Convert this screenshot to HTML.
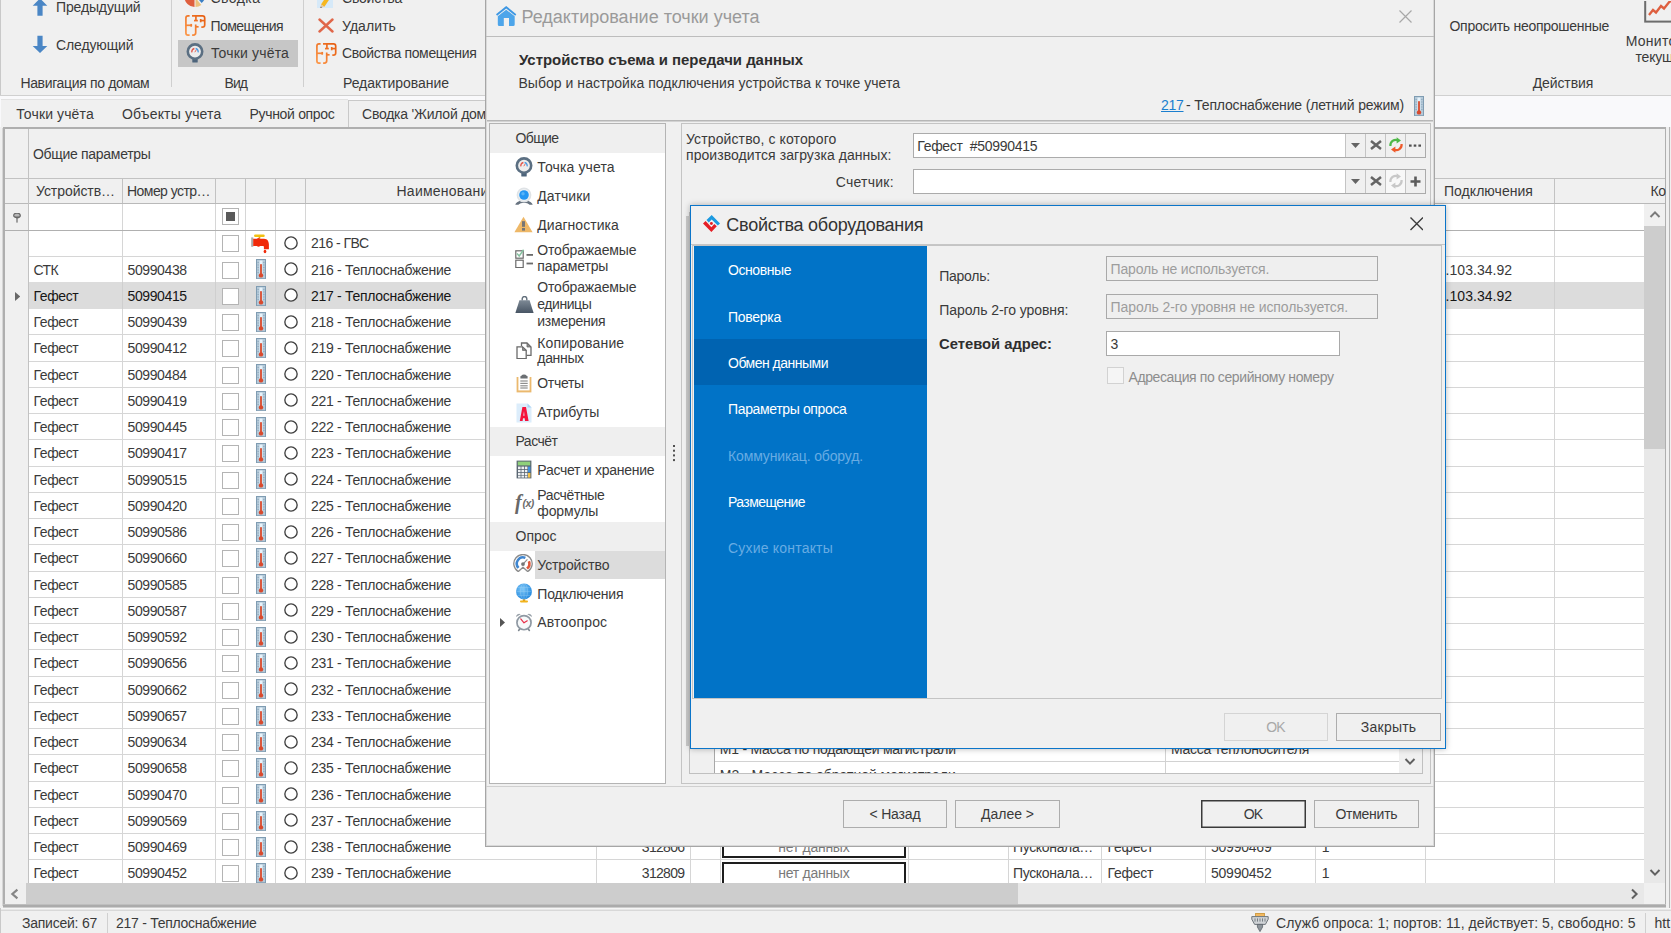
<!DOCTYPE html>
<html><head><meta charset="utf-8"><title>UI</title>
<style>
html,body{margin:0;padding:0;overflow:hidden;width:1671px;height:933px;}
#root{position:absolute;left:0;top:0;width:1671px;height:933px;overflow:hidden;background:#f0f0f0;}
body{width:1671px;height:933px;overflow:hidden;position:relative;background:#f0f0f0;font-family:"Liberation Sans", sans-serif;font-size:14px;color:#333;}
div,span,svg{box-sizing:border-box;}
.clip{position:absolute;overflow:hidden;}
</style></head><body><div id="root">
<div style="position:absolute;left:0px;top:0px;width:1671px;height:95px;background:#f0f0f0"></div>
<div style="position:absolute;left:0px;top:0px;width:1px;height:127px;background:#c9c9c9"></div>
<svg style="position:absolute;left:32px;top:-2px;" width="16" height="18" viewBox="0 0 16 18"><path d="M8 0.4 L15.3 7.8 H10.6 V17.8 H5.4 V7.8 H0.7 Z" fill="#4a86c5"/></svg>
<svg style="position:absolute;left:32px;top:35px;" width="16" height="18.5" viewBox="0 0 16 18.5"><path d="M8 18.1 L15.3 10.9 H10.6 V0.7 H5.4 V10.9 H0.7 Z" fill="#4a86c5"/></svg>
<span style="position:absolute;left:56.00px;top:-1.80px;line-height:18px;white-space:pre;font-size:14px;color:#3a3a3a;letter-spacing:-0.139px;">Предыдущий</span>
<span style="position:absolute;left:56.00px;top:35.50px;line-height:18px;white-space:pre;font-size:14px;color:#3a3a3a;letter-spacing:-0.122px;">Следующий</span>
<span style="position:absolute;left:20.40px;top:74.00px;line-height:18px;white-space:pre;font-size:14px;color:#3a3a3a;letter-spacing:-0.350px;">Навигация по домам</span>
<div style="position:absolute;left:171px;top:0px;width:1px;height:87px;background:#cfcfcf"></div>
<svg style="position:absolute;left:183.5px;top:-14.2px;" width="22" height="22" viewBox="0 0 22 22"><path d="M10.5 11 L10.5 21 A10 10 0 0 1 10.5 1 Z" fill="#df5f3e"/><path d="M11.5 11.8 L11.5 21 A10 10 0 0 0 17.3 18.9 Z" fill="#ecc27c"/><path d="M11.6 9.8 L17.6 17.1 A9.5 9.5 0 0 0 11.6 0.3 Z" fill="#3b7fc4"/></svg>
<span style="position:absolute;left:210.50px;top:-10.90px;line-height:18px;white-space:pre;font-size:14px;color:#3a3a3a;letter-spacing:0.456px;">Сводка</span>
<svg style="position:absolute;left:184.9px;top:15.4px;" width="21" height="21" viewBox="0 0 21 21"><defs><linearGradient id="rg" gradientUnits="userSpaceOnUse" x1="0" y1="21" x2="21" y2="0"><stop offset="0" stop-color="#fd9a4c"/><stop offset="1" stop-color="#e55a0d"/></linearGradient></defs><g fill="none" stroke="url(#rg)" stroke-width="1.7" stroke-linecap="butt" stroke-linejoin="round"><path d="M4.6 0.9 H3 Q0.9 0.9 0.9 3 V18 Q0.9 20.1 3 20.1 H4.6"/><path d="M0.9 10.3 H7.1"/><path d="M6.2 8.9 V11.7"/><path d="M7 0.9 H17.4 Q19.7 0.9 19.7 3.2 V10 Q19.7 12.2 17.4 12.2 H16.3"/><path d="M10.9 0.9 V5.6"/><path d="M9 5.6 H12.8"/><path d="M15.2 5.6 H19.7"/><path d="M15.7 4 V7.3"/><path d="M10.7 9.4 V17.8 Q10.7 20.1 8.4 20.1 H7.1"/><path d="M10.7 11.8 H13.6"/></g></svg>
<span style="position:absolute;left:210.50px;top:16.70px;line-height:18px;white-space:pre;font-size:14px;color:#3a3a3a;letter-spacing:-0.561px;">Помещения</span>
<div style="position:absolute;left:178px;top:40px;width:120px;height:27px;background:#c6c6c6"></div>
<svg style="position:absolute;left:186px;top:43px;" width="18.0" height="20.0" viewBox="0 0 18 20"><rect x="6.3" y="14.6" width="5.4" height="5" rx="0.6" fill="#4d647b"/><circle cx="9" cy="8.6" r="7.2" fill="#ececec" stroke="#5b6f82" stroke-width="2.6"/><path d="M5.9 9.4 A3.2 3.2 0 0 1 8.4 5.5" fill="none" stroke="#e2574b" stroke-width="1.4"/><path d="M9.6 5.5 A3.2 3.2 0 0 1 12.1 9.4" fill="none" stroke="#4d9be0" stroke-width="1.4"/><path d="M8.8 9.2 L10.2 7" stroke="#e2574b" stroke-width="0.9"/></svg>
<span style="position:absolute;left:211.00px;top:44.40px;line-height:18px;white-space:pre;font-size:14px;color:#3a3a3a;letter-spacing:0.165px;">Точки учёта</span>
<span style="position:absolute;left:224.50px;top:74.00px;line-height:18px;white-space:pre;font-size:14px;color:#3a3a3a;letter-spacing:-0.943px;">Вид</span>
<div style="position:absolute;left:303px;top:0px;width:1px;height:87px;background:#cfcfcf"></div>
<svg style="position:absolute;left:316.5px;top:-8.5px;" width="16" height="16" viewBox="0 0 16 16"><rect x="0" y="0" width="16" height="16" fill="#d6e9f8"/><path d="M4 12.6 L11.5 1 L15 3.4 L7.4 14.8 Z" fill="#f6b720"/><path d="M4 12.6 L7.4 14.8 L3.4 16 Z" fill="#e7c9a0"/><path d="M3.8 14.6 L4.9 15.4 L3.4 16 Z" fill="#444"/></svg>
<span style="position:absolute;left:342.00px;top:-10.90px;line-height:18px;white-space:pre;font-size:14px;color:#3a3a3a;letter-spacing:-0.186px;">Свойства</span>
<svg style="position:absolute;left:318px;top:18px;" width="16" height="15" viewBox="0 0 16 15"><path d="M1.5 1.5 L14.5 13.5 M14.5 1.5 L1.5 13.5" stroke="#e0674a" stroke-width="2.4" stroke-linecap="round"/></svg>
<span style="position:absolute;left:342.00px;top:17.10px;line-height:18px;white-space:pre;font-size:14px;color:#3a3a3a;letter-spacing:0.078px;">Удалить</span>
<svg style="position:absolute;left:316px;top:43px;" width="21" height="21" viewBox="0 0 21 21"><defs><linearGradient id="rg" gradientUnits="userSpaceOnUse" x1="0" y1="21" x2="21" y2="0"><stop offset="0" stop-color="#fd9a4c"/><stop offset="1" stop-color="#e55a0d"/></linearGradient></defs><g fill="none" stroke="url(#rg)" stroke-width="1.7" stroke-linecap="butt" stroke-linejoin="round"><path d="M4.6 0.9 H3 Q0.9 0.9 0.9 3 V18 Q0.9 20.1 3 20.1 H4.6"/><path d="M0.9 10.3 H7.1"/><path d="M6.2 8.9 V11.7"/><path d="M7 0.9 H17.4 Q19.7 0.9 19.7 3.2 V10 Q19.7 12.2 17.4 12.2 H16.3"/><path d="M10.9 0.9 V5.6"/><path d="M9 5.6 H12.8"/><path d="M15.2 5.6 H19.7"/><path d="M15.7 4 V7.3"/><path d="M10.7 9.4 V17.8 Q10.7 20.1 8.4 20.1 H7.1"/><path d="M10.7 11.8 H13.6"/></g></svg>
<span style="position:absolute;left:342.00px;top:44.40px;line-height:18px;white-space:pre;font-size:14px;color:#3a3a3a;letter-spacing:-0.330px;">Свойства помещения</span>
<span style="position:absolute;left:343.00px;top:74.00px;line-height:18px;white-space:pre;font-size:14px;color:#3a3a3a;letter-spacing:-0.047px;">Редактирование</span>
<span style="position:absolute;left:1449.50px;top:17.40px;line-height:18px;white-space:pre;font-size:14px;color:#3a3a3a;letter-spacing:-0.274px;">Опросить неопрошенные</span>
<svg style="position:absolute;left:1644px;top:0.6px;" width="40" height="24" viewBox="0 0 40 24"><rect x="1.2" y="-6" width="44" height="26.6" fill="#f0f0f0" stroke="#6c6c6c" stroke-width="2"/><path d="M5 14 L9 9 L12 11.5 L17 5 L20 7.5 L26 0 L30 2" fill="none" stroke="#de5f3f" stroke-width="2.3"/></svg>
<span style="position:absolute;left:1625.80px;top:32.40px;line-height:18px;white-space:pre;font-size:14px;color:#3a3a3a;letter-spacing:0.234px;">Мониторинг</span>
<span style="position:absolute;left:1635.60px;top:48.30px;line-height:18px;white-space:pre;font-size:14px;color:#3a3a3a;letter-spacing:-0.239px;">текущих</span>
<span style="position:absolute;left:1532.70px;top:74.40px;line-height:18px;white-space:pre;font-size:14px;color:#3a3a3a;letter-spacing:-0.105px;">Действия</span>
<div style="position:absolute;left:0px;top:95px;width:1671px;height:1px;background:#d0d0d0"></div>
<div style="position:absolute;left:0px;top:96px;width:1671px;height:31px;background:#f9f9fb"></div>
<div style="position:absolute;left:1px;top:99px;width:347px;height:28px;background:#f0f0f0;border-top:1px solid #e2e2e2"></div>
<div style="position:absolute;left:348px;top:100px;width:200px;height:27px;background:#f0f0f0;border:1px solid #c9c9c9;border-bottom:none"></div>
<span style="position:absolute;left:16.30px;top:104.50px;line-height:18px;white-space:pre;font-size:14px;color:#3a3a3a;letter-spacing:0.119px;">Точки учёта</span>
<span style="position:absolute;left:122.00px;top:104.50px;line-height:18px;white-space:pre;font-size:14px;color:#3a3a3a;letter-spacing:0.169px;">Объекты учета</span>
<span style="position:absolute;left:249.50px;top:104.50px;line-height:18px;white-space:pre;font-size:14px;color:#3a3a3a;letter-spacing:-0.318px;">Ручной опрос</span>
<span style="position:absolute;left:362.00px;top:104.50px;line-height:18px;white-space:pre;font-size:14px;color:#3a3a3a;letter-spacing:-0.233px;">Сводка &#x27;Жилой дом</span>
<div style="position:absolute;left:3px;top:127px;width:1663px;height:783px;background:#fff;border:2px solid #afafaf;border-right-width:1px"></div>
<div style="position:absolute;left:1666px;top:127px;width:5px;height:781px;background:#f0f0f0"></div>
<div style="position:absolute;left:2px;top:128px;width:1px;height:778px;background:#d6d6d6"></div>
<div style="position:absolute;left:1669px;top:127px;width:1px;height:781px;background:#b4b4b4"></div>
<div style="position:absolute;left:5px;top:129px;width:1660px;height:75px;background:#f0f0f0"></div>
<div style="position:absolute;left:5px;top:178px;width:1660px;height:1px;background:#c2c2c2"></div>
<div style="position:absolute;left:5px;top:203px;width:1660px;height:1px;background:#b9b9b9"></div>
<span style="position:absolute;left:33.00px;top:145.00px;line-height:18px;white-space:pre;font-size:14px;color:#3a3a3a;letter-spacing:-0.305px;">Общие параметры</span>
<div style="position:absolute;left:5px;top:204px;width:23px;height:680px;background:#f0f0f0"></div>
<div style="position:absolute;left:28px;top:129px;width:1px;height:755px;background:#c2c2c2"></div>
<div style="position:absolute;left:122px;top:179px;width:1px;height:24px;background:#c2c2c2"></div>
<div style="position:absolute;left:122px;top:204px;width:1px;height:680px;background:#d6d6d6"></div>
<div style="position:absolute;left:215px;top:179px;width:1px;height:24px;background:#c2c2c2"></div>
<div style="position:absolute;left:215px;top:204px;width:1px;height:680px;background:#d6d6d6"></div>
<div style="position:absolute;left:245px;top:179px;width:1px;height:24px;background:#c2c2c2"></div>
<div style="position:absolute;left:245px;top:204px;width:1px;height:680px;background:#d6d6d6"></div>
<div style="position:absolute;left:275px;top:179px;width:1px;height:24px;background:#c2c2c2"></div>
<div style="position:absolute;left:275px;top:204px;width:1px;height:680px;background:#d6d6d6"></div>
<div style="position:absolute;left:305px;top:179px;width:1px;height:24px;background:#c2c2c2"></div>
<div style="position:absolute;left:305px;top:204px;width:1px;height:680px;background:#d6d6d6"></div>
<div style="position:absolute;left:596px;top:179px;width:1px;height:24px;background:#c2c2c2"></div>
<div style="position:absolute;left:596px;top:204px;width:1px;height:680px;background:#d6d6d6"></div>
<div style="position:absolute;left:690px;top:179px;width:1px;height:24px;background:#c2c2c2"></div>
<div style="position:absolute;left:690px;top:204px;width:1px;height:680px;background:#d6d6d6"></div>
<div style="position:absolute;left:720px;top:179px;width:1px;height:24px;background:#c2c2c2"></div>
<div style="position:absolute;left:720px;top:204px;width:1px;height:680px;background:#d6d6d6"></div>
<div style="position:absolute;left:908px;top:179px;width:1px;height:24px;background:#c2c2c2"></div>
<div style="position:absolute;left:908px;top:204px;width:1px;height:680px;background:#d6d6d6"></div>
<div style="position:absolute;left:1008px;top:179px;width:1px;height:24px;background:#c2c2c2"></div>
<div style="position:absolute;left:1008px;top:204px;width:1px;height:680px;background:#d6d6d6"></div>
<div style="position:absolute;left:1101px;top:179px;width:1px;height:24px;background:#c2c2c2"></div>
<div style="position:absolute;left:1101px;top:204px;width:1px;height:680px;background:#d6d6d6"></div>
<div style="position:absolute;left:1205px;top:179px;width:1px;height:24px;background:#c2c2c2"></div>
<div style="position:absolute;left:1205px;top:204px;width:1px;height:680px;background:#d6d6d6"></div>
<div style="position:absolute;left:1315px;top:179px;width:1px;height:24px;background:#c2c2c2"></div>
<div style="position:absolute;left:1315px;top:204px;width:1px;height:680px;background:#d6d6d6"></div>
<div style="position:absolute;left:1425px;top:179px;width:1px;height:24px;background:#c2c2c2"></div>
<div style="position:absolute;left:1425px;top:204px;width:1px;height:680px;background:#d6d6d6"></div>
<div style="position:absolute;left:1554px;top:179px;width:1px;height:24px;background:#c2c2c2"></div>
<div style="position:absolute;left:1554px;top:204px;width:1px;height:680px;background:#d6d6d6"></div>
<span style="position:absolute;left:36.00px;top:182.00px;line-height:18px;white-space:pre;font-size:14px;color:#3a3a3a;letter-spacing:-0.062px;">Устройств…</span>
<span style="position:absolute;left:127.00px;top:182.00px;line-height:18px;white-space:pre;font-size:14px;color:#3a3a3a;letter-spacing:-0.548px;">Номер устр…</span>
<span style="position:absolute;left:396.50px;top:182.00px;line-height:18px;white-space:pre;font-size:14px;color:#3a3a3a;letter-spacing:0.245px;">Наименование</span>
<span style="position:absolute;left:1444.00px;top:182.00px;line-height:18px;white-space:pre;font-size:14px;color:#3a3a3a;letter-spacing:0.038px;">Подключения</span>
<span style="position:absolute;left:1650.40px;top:182.00px;line-height:18px;white-space:pre;font-size:14px;color:#3a3a3a;letter-spacing:-0.227px;">Ко</span>
<div style="position:absolute;left:5px;top:230px;width:1639px;height:1px;background:#b0b0b0"></div>
<svg style="position:absolute;left:13px;top:212.8px;" width="8" height="11" viewBox="0 0 8 11"><ellipse cx="4" cy="2.4" rx="3.3" ry="2.2" fill="#b8b8b8" stroke="#6a6a6a" stroke-width="1.2"/><path d="M1.2 3.4 L4 5.6 L6.8 3.4 Z" fill="#6a6a6a"/><rect x="3.4" y="4.6" width="1.2" height="5" fill="#6a6a6a"/></svg>
<svg style="position:absolute;left:222.0px;top:208.0px;" width="17" height="17" viewBox="0 0 17 17"><rect x="0.5" y="0.5" width="16" height="16" fill="#fff" stroke="#b4b4b4"/><rect x="4" y="4" width="9" height="9" fill="#5a5a5a"/></svg>
<div class="clip" style="left:5px;top:231px;width:1639px;height:652px">
<svg style="position:absolute;left:217.0px;top:3.5px;" width="17" height="17" viewBox="0 0 17 17"><rect x="0.5" y="0.5" width="16" height="16" fill="#fff" stroke="#b4b4b4"/></svg>
<svg style="position:absolute;left:246px;top:3px;" width="19" height="20" viewBox="0 0 19 20"><rect x="3.1" y="0.4" width="10.6" height="2.7" rx="1.1" fill="#f2c010"/><rect x="7.6" y="2.8" width="1.7" height="1.8" fill="#e0a010"/><rect x="0.2" y="3.4" width="2.1" height="9.4" fill="#a9a9a9"/><path d="M2.2 4.8 H5.8 Q7.5 3.4 9.2 4.8 H13 C16.6 4.8 17.9 7.6 17.9 10.6 V15.2 H12.9 V12.7 C12.9 12.1 12.6 11.9 12 11.9 H9.2 Q7.5 13.4 5.8 11.9 H2.2 Z" fill="#f02a0a"/><ellipse cx="14" cy="17.5" rx="1.35" ry="1.8" fill="#f02a0a"/></svg>
<svg style="position:absolute;left:277.8px;top:4.199999999999999px;" width="16" height="16" viewBox="0 0 16 16"><circle cx="8" cy="8" r="6.15" fill="#fff" stroke="#404040" stroke-width="1.35"/></svg>
<span style="position:absolute;left:306.00px;top:3.40px;line-height:18px;white-space:pre;font-size:14px;color:#3a3a3a;letter-spacing:-0.542px;">216 - ГВС</span>
<div style="position:absolute;left:24px;top:25px;width:1615px;height:1px;background:#d6d6d6"></div>
<span style="position:absolute;left:28.60px;top:29.65px;line-height:18px;white-space:pre;font-size:14px;color:#3a3a3a;letter-spacing:-0.620px;">СТК</span>
<span style="position:absolute;left:122.50px;top:29.65px;line-height:18px;white-space:pre;font-size:14px;color:#3a3a3a;letter-spacing:-0.387px;">50990438</span>
<svg style="position:absolute;left:217.0px;top:30.5px;" width="17" height="17" viewBox="0 0 17 17"><rect x="0.5" y="0.5" width="16" height="16" fill="#fff" stroke="#b4b4b4"/></svg>
<svg style="position:absolute;left:251.2px;top:28px;" width="10" height="20.2" viewBox="0 0 10 20.2"><rect x="0.5" y="0.5" width="9" height="19.2" fill="#b4c9d8" stroke="#7f9cb2"/><rect x="3.5" y="1.6" width="3" height="15" fill="#e6f3fb"/><rect x="4" y="5.2" width="2" height="11" fill="#d9593f"/><circle cx="5" cy="16.4" r="2.2" fill="#d84a2e"/><g stroke="#8aa5b9" stroke-width="0.7"><line x1="1.4" y1="3.5" x2="3" y2="3.5"/><line x1="1.4" y1="6" x2="3" y2="6"/><line x1="1.4" y1="8.5" x2="3" y2="8.5"/><line x1="1.4" y1="11" x2="3" y2="11"/><line x1="1.4" y1="13.5" x2="3" y2="13.5"/><line x1="7" y1="3.5" x2="8.6" y2="3.5"/><line x1="7" y1="6" x2="8.6" y2="6"/><line x1="7" y1="8.5" x2="8.6" y2="8.5"/><line x1="7" y1="11" x2="8.6" y2="11"/><line x1="7" y1="13.5" x2="8.6" y2="13.5"/></g></svg>
<svg style="position:absolute;left:277.8px;top:30.200000000000003px;" width="16" height="16" viewBox="0 0 16 16"><circle cx="8" cy="8" r="6.15" fill="#fff" stroke="#404040" stroke-width="1.35"/></svg>
<span style="position:absolute;left:306.00px;top:29.65px;line-height:18px;white-space:pre;font-size:14px;color:#3a3a3a;letter-spacing:-0.296px;">216 - Теплоснабжение</span>
<span style="position:absolute;left:1440.60px;top:29.65px;line-height:18px;white-space:pre;font-size:14px;color:#3a3a3a;letter-spacing:0.033px;">.103.34.92</span>
<div style="position:absolute;left:24px;top:51px;width:1615px;height:27px;background:#dcdcdc"></div>
<div style="position:absolute;left:117px;top:51px;width:1px;height:27px;background:#cfcfcf"></div>
<div style="position:absolute;left:210px;top:51px;width:1px;height:27px;background:#cfcfcf"></div>
<div style="position:absolute;left:240px;top:51px;width:1px;height:27px;background:#cfcfcf"></div>
<div style="position:absolute;left:270px;top:51px;width:1px;height:27px;background:#cfcfcf"></div>
<div style="position:absolute;left:300px;top:51px;width:1px;height:27px;background:#cfcfcf"></div>
<div style="position:absolute;left:591px;top:51px;width:1px;height:27px;background:#cfcfcf"></div>
<div style="position:absolute;left:685px;top:51px;width:1px;height:27px;background:#cfcfcf"></div>
<div style="position:absolute;left:715px;top:51px;width:1px;height:27px;background:#cfcfcf"></div>
<div style="position:absolute;left:903px;top:51px;width:1px;height:27px;background:#cfcfcf"></div>
<div style="position:absolute;left:1003px;top:51px;width:1px;height:27px;background:#cfcfcf"></div>
<div style="position:absolute;left:1096px;top:51px;width:1px;height:27px;background:#cfcfcf"></div>
<div style="position:absolute;left:1200px;top:51px;width:1px;height:27px;background:#cfcfcf"></div>
<div style="position:absolute;left:1310px;top:51px;width:1px;height:27px;background:#cfcfcf"></div>
<div style="position:absolute;left:1420px;top:51px;width:1px;height:27px;background:#cfcfcf"></div>
<div style="position:absolute;left:1549px;top:51px;width:1px;height:27px;background:#cfcfcf"></div>
<svg style="position:absolute;left:9.8px;top:61px;" width="5.2" height="9" viewBox="0 0 5.2 9"><path d="M0 0 L5.2 4.5 L0 9 Z" fill="#686868"/></svg>
<span style="position:absolute;left:28.60px;top:55.90px;line-height:18px;white-space:pre;font-size:14px;color:#161616;letter-spacing:-0.393px;">Гефест</span>
<span style="position:absolute;left:122.50px;top:55.90px;line-height:18px;white-space:pre;font-size:14px;color:#161616;letter-spacing:-0.387px;">50990415</span>
<svg style="position:absolute;left:217.0px;top:56.5px;" width="17" height="17" viewBox="0 0 17 17"><rect x="0.5" y="0.5" width="16" height="16" fill="#fff" stroke="#b4b4b4"/></svg>
<svg style="position:absolute;left:251.2px;top:55px;" width="10" height="20.2" viewBox="0 0 10 20.2"><rect x="0.5" y="0.5" width="9" height="19.2" fill="#b4c9d8" stroke="#7f9cb2"/><rect x="3.5" y="1.6" width="3" height="15" fill="#e6f3fb"/><rect x="4" y="5.2" width="2" height="11" fill="#d9593f"/><circle cx="5" cy="16.4" r="2.2" fill="#d84a2e"/><g stroke="#8aa5b9" stroke-width="0.7"><line x1="1.4" y1="3.5" x2="3" y2="3.5"/><line x1="1.4" y1="6" x2="3" y2="6"/><line x1="1.4" y1="8.5" x2="3" y2="8.5"/><line x1="1.4" y1="11" x2="3" y2="11"/><line x1="1.4" y1="13.5" x2="3" y2="13.5"/><line x1="7" y1="3.5" x2="8.6" y2="3.5"/><line x1="7" y1="6" x2="8.6" y2="6"/><line x1="7" y1="8.5" x2="8.6" y2="8.5"/><line x1="7" y1="11" x2="8.6" y2="11"/><line x1="7" y1="13.5" x2="8.6" y2="13.5"/></g></svg>
<svg style="position:absolute;left:277.8px;top:56.2px;" width="16" height="16" viewBox="0 0 16 16"><circle cx="8" cy="8" r="6.15" fill="#fff" stroke="#404040" stroke-width="1.35"/></svg>
<span style="position:absolute;left:306.00px;top:55.90px;line-height:18px;white-space:pre;font-size:14px;color:#161616;letter-spacing:-0.296px;">217 - Теплоснабжение</span>
<span style="position:absolute;left:1440.60px;top:55.90px;line-height:18px;white-space:pre;font-size:14px;color:#161616;letter-spacing:0.033px;">.103.34.92</span>
<span style="position:absolute;left:28.60px;top:82.15px;line-height:18px;white-space:pre;font-size:14px;color:#3a3a3a;letter-spacing:-0.393px;">Гефест</span>
<span style="position:absolute;left:122.50px;top:82.15px;line-height:18px;white-space:pre;font-size:14px;color:#3a3a3a;letter-spacing:-0.387px;">50990439</span>
<svg style="position:absolute;left:217.0px;top:82.5px;" width="17" height="17" viewBox="0 0 17 17"><rect x="0.5" y="0.5" width="16" height="16" fill="#fff" stroke="#b4b4b4"/></svg>
<svg style="position:absolute;left:251.2px;top:81px;" width="10" height="20.2" viewBox="0 0 10 20.2"><rect x="0.5" y="0.5" width="9" height="19.2" fill="#b4c9d8" stroke="#7f9cb2"/><rect x="3.5" y="1.6" width="3" height="15" fill="#e6f3fb"/><rect x="4" y="5.2" width="2" height="11" fill="#d9593f"/><circle cx="5" cy="16.4" r="2.2" fill="#d84a2e"/><g stroke="#8aa5b9" stroke-width="0.7"><line x1="1.4" y1="3.5" x2="3" y2="3.5"/><line x1="1.4" y1="6" x2="3" y2="6"/><line x1="1.4" y1="8.5" x2="3" y2="8.5"/><line x1="1.4" y1="11" x2="3" y2="11"/><line x1="1.4" y1="13.5" x2="3" y2="13.5"/><line x1="7" y1="3.5" x2="8.6" y2="3.5"/><line x1="7" y1="6" x2="8.6" y2="6"/><line x1="7" y1="8.5" x2="8.6" y2="8.5"/><line x1="7" y1="11" x2="8.6" y2="11"/><line x1="7" y1="13.5" x2="8.6" y2="13.5"/></g></svg>
<svg style="position:absolute;left:277.8px;top:83.2px;" width="16" height="16" viewBox="0 0 16 16"><circle cx="8" cy="8" r="6.15" fill="#fff" stroke="#404040" stroke-width="1.35"/></svg>
<span style="position:absolute;left:306.00px;top:82.15px;line-height:18px;white-space:pre;font-size:14px;color:#3a3a3a;letter-spacing:-0.296px;">218 - Теплоснабжение</span>
<div style="position:absolute;left:24px;top:103px;width:1615px;height:1px;background:#d6d6d6"></div>
<span style="position:absolute;left:28.60px;top:108.40px;line-height:18px;white-space:pre;font-size:14px;color:#3a3a3a;letter-spacing:-0.393px;">Гефест</span>
<span style="position:absolute;left:122.50px;top:108.40px;line-height:18px;white-space:pre;font-size:14px;color:#3a3a3a;letter-spacing:-0.387px;">50990412</span>
<svg style="position:absolute;left:217.0px;top:108.5px;" width="17" height="17" viewBox="0 0 17 17"><rect x="0.5" y="0.5" width="16" height="16" fill="#fff" stroke="#b4b4b4"/></svg>
<svg style="position:absolute;left:251.2px;top:107px;" width="10" height="20.2" viewBox="0 0 10 20.2"><rect x="0.5" y="0.5" width="9" height="19.2" fill="#b4c9d8" stroke="#7f9cb2"/><rect x="3.5" y="1.6" width="3" height="15" fill="#e6f3fb"/><rect x="4" y="5.2" width="2" height="11" fill="#d9593f"/><circle cx="5" cy="16.4" r="2.2" fill="#d84a2e"/><g stroke="#8aa5b9" stroke-width="0.7"><line x1="1.4" y1="3.5" x2="3" y2="3.5"/><line x1="1.4" y1="6" x2="3" y2="6"/><line x1="1.4" y1="8.5" x2="3" y2="8.5"/><line x1="1.4" y1="11" x2="3" y2="11"/><line x1="1.4" y1="13.5" x2="3" y2="13.5"/><line x1="7" y1="3.5" x2="8.6" y2="3.5"/><line x1="7" y1="6" x2="8.6" y2="6"/><line x1="7" y1="8.5" x2="8.6" y2="8.5"/><line x1="7" y1="11" x2="8.6" y2="11"/><line x1="7" y1="13.5" x2="8.6" y2="13.5"/></g></svg>
<svg style="position:absolute;left:277.8px;top:109.2px;" width="16" height="16" viewBox="0 0 16 16"><circle cx="8" cy="8" r="6.15" fill="#fff" stroke="#404040" stroke-width="1.35"/></svg>
<span style="position:absolute;left:306.00px;top:108.40px;line-height:18px;white-space:pre;font-size:14px;color:#3a3a3a;letter-spacing:-0.296px;">219 - Теплоснабжение</span>
<div style="position:absolute;left:24px;top:130px;width:1615px;height:1px;background:#d6d6d6"></div>
<span style="position:absolute;left:28.60px;top:134.65px;line-height:18px;white-space:pre;font-size:14px;color:#3a3a3a;letter-spacing:-0.393px;">Гефест</span>
<span style="position:absolute;left:122.50px;top:134.65px;line-height:18px;white-space:pre;font-size:14px;color:#3a3a3a;letter-spacing:-0.387px;">50990484</span>
<svg style="position:absolute;left:217.0px;top:135.5px;" width="17" height="17" viewBox="0 0 17 17"><rect x="0.5" y="0.5" width="16" height="16" fill="#fff" stroke="#b4b4b4"/></svg>
<svg style="position:absolute;left:251.2px;top:133px;" width="10" height="20.2" viewBox="0 0 10 20.2"><rect x="0.5" y="0.5" width="9" height="19.2" fill="#b4c9d8" stroke="#7f9cb2"/><rect x="3.5" y="1.6" width="3" height="15" fill="#e6f3fb"/><rect x="4" y="5.2" width="2" height="11" fill="#d9593f"/><circle cx="5" cy="16.4" r="2.2" fill="#d84a2e"/><g stroke="#8aa5b9" stroke-width="0.7"><line x1="1.4" y1="3.5" x2="3" y2="3.5"/><line x1="1.4" y1="6" x2="3" y2="6"/><line x1="1.4" y1="8.5" x2="3" y2="8.5"/><line x1="1.4" y1="11" x2="3" y2="11"/><line x1="1.4" y1="13.5" x2="3" y2="13.5"/><line x1="7" y1="3.5" x2="8.6" y2="3.5"/><line x1="7" y1="6" x2="8.6" y2="6"/><line x1="7" y1="8.5" x2="8.6" y2="8.5"/><line x1="7" y1="11" x2="8.6" y2="11"/><line x1="7" y1="13.5" x2="8.6" y2="13.5"/></g></svg>
<svg style="position:absolute;left:277.8px;top:135.2px;" width="16" height="16" viewBox="0 0 16 16"><circle cx="8" cy="8" r="6.15" fill="#fff" stroke="#404040" stroke-width="1.35"/></svg>
<span style="position:absolute;left:306.00px;top:134.65px;line-height:18px;white-space:pre;font-size:14px;color:#3a3a3a;letter-spacing:-0.296px;">220 - Теплоснабжение</span>
<div style="position:absolute;left:24px;top:156px;width:1615px;height:1px;background:#d6d6d6"></div>
<span style="position:absolute;left:28.60px;top:160.90px;line-height:18px;white-space:pre;font-size:14px;color:#3a3a3a;letter-spacing:-0.393px;">Гефест</span>
<span style="position:absolute;left:122.50px;top:160.90px;line-height:18px;white-space:pre;font-size:14px;color:#3a3a3a;letter-spacing:-0.387px;">50990419</span>
<svg style="position:absolute;left:217.0px;top:161.5px;" width="17" height="17" viewBox="0 0 17 17"><rect x="0.5" y="0.5" width="16" height="16" fill="#fff" stroke="#b4b4b4"/></svg>
<svg style="position:absolute;left:251.2px;top:160px;" width="10" height="20.2" viewBox="0 0 10 20.2"><rect x="0.5" y="0.5" width="9" height="19.2" fill="#b4c9d8" stroke="#7f9cb2"/><rect x="3.5" y="1.6" width="3" height="15" fill="#e6f3fb"/><rect x="4" y="5.2" width="2" height="11" fill="#d9593f"/><circle cx="5" cy="16.4" r="2.2" fill="#d84a2e"/><g stroke="#8aa5b9" stroke-width="0.7"><line x1="1.4" y1="3.5" x2="3" y2="3.5"/><line x1="1.4" y1="6" x2="3" y2="6"/><line x1="1.4" y1="8.5" x2="3" y2="8.5"/><line x1="1.4" y1="11" x2="3" y2="11"/><line x1="1.4" y1="13.5" x2="3" y2="13.5"/><line x1="7" y1="3.5" x2="8.6" y2="3.5"/><line x1="7" y1="6" x2="8.6" y2="6"/><line x1="7" y1="8.5" x2="8.6" y2="8.5"/><line x1="7" y1="11" x2="8.6" y2="11"/><line x1="7" y1="13.5" x2="8.6" y2="13.5"/></g></svg>
<svg style="position:absolute;left:277.8px;top:161.2px;" width="16" height="16" viewBox="0 0 16 16"><circle cx="8" cy="8" r="6.15" fill="#fff" stroke="#404040" stroke-width="1.35"/></svg>
<span style="position:absolute;left:306.00px;top:160.90px;line-height:18px;white-space:pre;font-size:14px;color:#3a3a3a;letter-spacing:-0.296px;">221 - Теплоснабжение</span>
<div style="position:absolute;left:24px;top:182px;width:1615px;height:1px;background:#d6d6d6"></div>
<span style="position:absolute;left:28.60px;top:187.15px;line-height:18px;white-space:pre;font-size:14px;color:#3a3a3a;letter-spacing:-0.393px;">Гефест</span>
<span style="position:absolute;left:122.50px;top:187.15px;line-height:18px;white-space:pre;font-size:14px;color:#3a3a3a;letter-spacing:-0.387px;">50990445</span>
<svg style="position:absolute;left:217.0px;top:187.5px;" width="17" height="17" viewBox="0 0 17 17"><rect x="0.5" y="0.5" width="16" height="16" fill="#fff" stroke="#b4b4b4"/></svg>
<svg style="position:absolute;left:251.2px;top:186px;" width="10" height="20.2" viewBox="0 0 10 20.2"><rect x="0.5" y="0.5" width="9" height="19.2" fill="#b4c9d8" stroke="#7f9cb2"/><rect x="3.5" y="1.6" width="3" height="15" fill="#e6f3fb"/><rect x="4" y="5.2" width="2" height="11" fill="#d9593f"/><circle cx="5" cy="16.4" r="2.2" fill="#d84a2e"/><g stroke="#8aa5b9" stroke-width="0.7"><line x1="1.4" y1="3.5" x2="3" y2="3.5"/><line x1="1.4" y1="6" x2="3" y2="6"/><line x1="1.4" y1="8.5" x2="3" y2="8.5"/><line x1="1.4" y1="11" x2="3" y2="11"/><line x1="1.4" y1="13.5" x2="3" y2="13.5"/><line x1="7" y1="3.5" x2="8.6" y2="3.5"/><line x1="7" y1="6" x2="8.6" y2="6"/><line x1="7" y1="8.5" x2="8.6" y2="8.5"/><line x1="7" y1="11" x2="8.6" y2="11"/><line x1="7" y1="13.5" x2="8.6" y2="13.5"/></g></svg>
<svg style="position:absolute;left:277.8px;top:188.2px;" width="16" height="16" viewBox="0 0 16 16"><circle cx="8" cy="8" r="6.15" fill="#fff" stroke="#404040" stroke-width="1.35"/></svg>
<span style="position:absolute;left:306.00px;top:187.15px;line-height:18px;white-space:pre;font-size:14px;color:#3a3a3a;letter-spacing:-0.296px;">222 - Теплоснабжение</span>
<div style="position:absolute;left:24px;top:208px;width:1615px;height:1px;background:#d6d6d6"></div>
<span style="position:absolute;left:28.60px;top:213.40px;line-height:18px;white-space:pre;font-size:14px;color:#3a3a3a;letter-spacing:-0.393px;">Гефест</span>
<span style="position:absolute;left:122.50px;top:213.40px;line-height:18px;white-space:pre;font-size:14px;color:#3a3a3a;letter-spacing:-0.387px;">50990417</span>
<svg style="position:absolute;left:217.0px;top:213.5px;" width="17" height="17" viewBox="0 0 17 17"><rect x="0.5" y="0.5" width="16" height="16" fill="#fff" stroke="#b4b4b4"/></svg>
<svg style="position:absolute;left:251.2px;top:212px;" width="10" height="20.2" viewBox="0 0 10 20.2"><rect x="0.5" y="0.5" width="9" height="19.2" fill="#b4c9d8" stroke="#7f9cb2"/><rect x="3.5" y="1.6" width="3" height="15" fill="#e6f3fb"/><rect x="4" y="5.2" width="2" height="11" fill="#d9593f"/><circle cx="5" cy="16.4" r="2.2" fill="#d84a2e"/><g stroke="#8aa5b9" stroke-width="0.7"><line x1="1.4" y1="3.5" x2="3" y2="3.5"/><line x1="1.4" y1="6" x2="3" y2="6"/><line x1="1.4" y1="8.5" x2="3" y2="8.5"/><line x1="1.4" y1="11" x2="3" y2="11"/><line x1="1.4" y1="13.5" x2="3" y2="13.5"/><line x1="7" y1="3.5" x2="8.6" y2="3.5"/><line x1="7" y1="6" x2="8.6" y2="6"/><line x1="7" y1="8.5" x2="8.6" y2="8.5"/><line x1="7" y1="11" x2="8.6" y2="11"/><line x1="7" y1="13.5" x2="8.6" y2="13.5"/></g></svg>
<svg style="position:absolute;left:277.8px;top:214.2px;" width="16" height="16" viewBox="0 0 16 16"><circle cx="8" cy="8" r="6.15" fill="#fff" stroke="#404040" stroke-width="1.35"/></svg>
<span style="position:absolute;left:306.00px;top:213.40px;line-height:18px;white-space:pre;font-size:14px;color:#3a3a3a;letter-spacing:-0.296px;">223 - Теплоснабжение</span>
<div style="position:absolute;left:24px;top:235px;width:1615px;height:1px;background:#d6d6d6"></div>
<span style="position:absolute;left:28.60px;top:239.65px;line-height:18px;white-space:pre;font-size:14px;color:#3a3a3a;letter-spacing:-0.393px;">Гефест</span>
<span style="position:absolute;left:122.50px;top:239.65px;line-height:18px;white-space:pre;font-size:14px;color:#3a3a3a;letter-spacing:-0.387px;">50990515</span>
<svg style="position:absolute;left:217.0px;top:240.5px;" width="17" height="17" viewBox="0 0 17 17"><rect x="0.5" y="0.5" width="16" height="16" fill="#fff" stroke="#b4b4b4"/></svg>
<svg style="position:absolute;left:251.2px;top:238px;" width="10" height="20.2" viewBox="0 0 10 20.2"><rect x="0.5" y="0.5" width="9" height="19.2" fill="#b4c9d8" stroke="#7f9cb2"/><rect x="3.5" y="1.6" width="3" height="15" fill="#e6f3fb"/><rect x="4" y="5.2" width="2" height="11" fill="#d9593f"/><circle cx="5" cy="16.4" r="2.2" fill="#d84a2e"/><g stroke="#8aa5b9" stroke-width="0.7"><line x1="1.4" y1="3.5" x2="3" y2="3.5"/><line x1="1.4" y1="6" x2="3" y2="6"/><line x1="1.4" y1="8.5" x2="3" y2="8.5"/><line x1="1.4" y1="11" x2="3" y2="11"/><line x1="1.4" y1="13.5" x2="3" y2="13.5"/><line x1="7" y1="3.5" x2="8.6" y2="3.5"/><line x1="7" y1="6" x2="8.6" y2="6"/><line x1="7" y1="8.5" x2="8.6" y2="8.5"/><line x1="7" y1="11" x2="8.6" y2="11"/><line x1="7" y1="13.5" x2="8.6" y2="13.5"/></g></svg>
<svg style="position:absolute;left:277.8px;top:240.2px;" width="16" height="16" viewBox="0 0 16 16"><circle cx="8" cy="8" r="6.15" fill="#fff" stroke="#404040" stroke-width="1.35"/></svg>
<span style="position:absolute;left:306.00px;top:239.65px;line-height:18px;white-space:pre;font-size:14px;color:#3a3a3a;letter-spacing:-0.296px;">224 - Теплоснабжение</span>
<div style="position:absolute;left:24px;top:261px;width:1615px;height:1px;background:#d6d6d6"></div>
<span style="position:absolute;left:28.60px;top:265.90px;line-height:18px;white-space:pre;font-size:14px;color:#3a3a3a;letter-spacing:-0.393px;">Гефест</span>
<span style="position:absolute;left:122.50px;top:265.90px;line-height:18px;white-space:pre;font-size:14px;color:#3a3a3a;letter-spacing:-0.387px;">50990420</span>
<svg style="position:absolute;left:217.0px;top:266.5px;" width="17" height="17" viewBox="0 0 17 17"><rect x="0.5" y="0.5" width="16" height="16" fill="#fff" stroke="#b4b4b4"/></svg>
<svg style="position:absolute;left:251.2px;top:265px;" width="10" height="20.2" viewBox="0 0 10 20.2"><rect x="0.5" y="0.5" width="9" height="19.2" fill="#b4c9d8" stroke="#7f9cb2"/><rect x="3.5" y="1.6" width="3" height="15" fill="#e6f3fb"/><rect x="4" y="5.2" width="2" height="11" fill="#d9593f"/><circle cx="5" cy="16.4" r="2.2" fill="#d84a2e"/><g stroke="#8aa5b9" stroke-width="0.7"><line x1="1.4" y1="3.5" x2="3" y2="3.5"/><line x1="1.4" y1="6" x2="3" y2="6"/><line x1="1.4" y1="8.5" x2="3" y2="8.5"/><line x1="1.4" y1="11" x2="3" y2="11"/><line x1="1.4" y1="13.5" x2="3" y2="13.5"/><line x1="7" y1="3.5" x2="8.6" y2="3.5"/><line x1="7" y1="6" x2="8.6" y2="6"/><line x1="7" y1="8.5" x2="8.6" y2="8.5"/><line x1="7" y1="11" x2="8.6" y2="11"/><line x1="7" y1="13.5" x2="8.6" y2="13.5"/></g></svg>
<svg style="position:absolute;left:277.8px;top:266.2px;" width="16" height="16" viewBox="0 0 16 16"><circle cx="8" cy="8" r="6.15" fill="#fff" stroke="#404040" stroke-width="1.35"/></svg>
<span style="position:absolute;left:306.00px;top:265.90px;line-height:18px;white-space:pre;font-size:14px;color:#3a3a3a;letter-spacing:-0.296px;">225 - Теплоснабжение</span>
<div style="position:absolute;left:24px;top:287px;width:1615px;height:1px;background:#d6d6d6"></div>
<span style="position:absolute;left:28.60px;top:292.15px;line-height:18px;white-space:pre;font-size:14px;color:#3a3a3a;letter-spacing:-0.393px;">Гефест</span>
<span style="position:absolute;left:122.50px;top:292.15px;line-height:18px;white-space:pre;font-size:14px;color:#3a3a3a;letter-spacing:-0.387px;">50990586</span>
<svg style="position:absolute;left:217.0px;top:292.5px;" width="17" height="17" viewBox="0 0 17 17"><rect x="0.5" y="0.5" width="16" height="16" fill="#fff" stroke="#b4b4b4"/></svg>
<svg style="position:absolute;left:251.2px;top:291px;" width="10" height="20.2" viewBox="0 0 10 20.2"><rect x="0.5" y="0.5" width="9" height="19.2" fill="#b4c9d8" stroke="#7f9cb2"/><rect x="3.5" y="1.6" width="3" height="15" fill="#e6f3fb"/><rect x="4" y="5.2" width="2" height="11" fill="#d9593f"/><circle cx="5" cy="16.4" r="2.2" fill="#d84a2e"/><g stroke="#8aa5b9" stroke-width="0.7"><line x1="1.4" y1="3.5" x2="3" y2="3.5"/><line x1="1.4" y1="6" x2="3" y2="6"/><line x1="1.4" y1="8.5" x2="3" y2="8.5"/><line x1="1.4" y1="11" x2="3" y2="11"/><line x1="1.4" y1="13.5" x2="3" y2="13.5"/><line x1="7" y1="3.5" x2="8.6" y2="3.5"/><line x1="7" y1="6" x2="8.6" y2="6"/><line x1="7" y1="8.5" x2="8.6" y2="8.5"/><line x1="7" y1="11" x2="8.6" y2="11"/><line x1="7" y1="13.5" x2="8.6" y2="13.5"/></g></svg>
<svg style="position:absolute;left:277.8px;top:293.2px;" width="16" height="16" viewBox="0 0 16 16"><circle cx="8" cy="8" r="6.15" fill="#fff" stroke="#404040" stroke-width="1.35"/></svg>
<span style="position:absolute;left:306.00px;top:292.15px;line-height:18px;white-space:pre;font-size:14px;color:#3a3a3a;letter-spacing:-0.296px;">226 - Теплоснабжение</span>
<div style="position:absolute;left:24px;top:313px;width:1615px;height:1px;background:#d6d6d6"></div>
<span style="position:absolute;left:28.60px;top:318.40px;line-height:18px;white-space:pre;font-size:14px;color:#3a3a3a;letter-spacing:-0.393px;">Гефест</span>
<span style="position:absolute;left:122.50px;top:318.40px;line-height:18px;white-space:pre;font-size:14px;color:#3a3a3a;letter-spacing:-0.387px;">50990660</span>
<svg style="position:absolute;left:217.0px;top:318.5px;" width="17" height="17" viewBox="0 0 17 17"><rect x="0.5" y="0.5" width="16" height="16" fill="#fff" stroke="#b4b4b4"/></svg>
<svg style="position:absolute;left:251.2px;top:317px;" width="10" height="20.2" viewBox="0 0 10 20.2"><rect x="0.5" y="0.5" width="9" height="19.2" fill="#b4c9d8" stroke="#7f9cb2"/><rect x="3.5" y="1.6" width="3" height="15" fill="#e6f3fb"/><rect x="4" y="5.2" width="2" height="11" fill="#d9593f"/><circle cx="5" cy="16.4" r="2.2" fill="#d84a2e"/><g stroke="#8aa5b9" stroke-width="0.7"><line x1="1.4" y1="3.5" x2="3" y2="3.5"/><line x1="1.4" y1="6" x2="3" y2="6"/><line x1="1.4" y1="8.5" x2="3" y2="8.5"/><line x1="1.4" y1="11" x2="3" y2="11"/><line x1="1.4" y1="13.5" x2="3" y2="13.5"/><line x1="7" y1="3.5" x2="8.6" y2="3.5"/><line x1="7" y1="6" x2="8.6" y2="6"/><line x1="7" y1="8.5" x2="8.6" y2="8.5"/><line x1="7" y1="11" x2="8.6" y2="11"/><line x1="7" y1="13.5" x2="8.6" y2="13.5"/></g></svg>
<svg style="position:absolute;left:277.8px;top:319.2px;" width="16" height="16" viewBox="0 0 16 16"><circle cx="8" cy="8" r="6.15" fill="#fff" stroke="#404040" stroke-width="1.35"/></svg>
<span style="position:absolute;left:306.00px;top:318.40px;line-height:18px;white-space:pre;font-size:14px;color:#3a3a3a;letter-spacing:-0.296px;">227 - Теплоснабжение</span>
<div style="position:absolute;left:24px;top:340px;width:1615px;height:1px;background:#d6d6d6"></div>
<span style="position:absolute;left:28.60px;top:344.65px;line-height:18px;white-space:pre;font-size:14px;color:#3a3a3a;letter-spacing:-0.393px;">Гефест</span>
<span style="position:absolute;left:122.50px;top:344.65px;line-height:18px;white-space:pre;font-size:14px;color:#3a3a3a;letter-spacing:-0.387px;">50990585</span>
<svg style="position:absolute;left:217.0px;top:345.5px;" width="17" height="17" viewBox="0 0 17 17"><rect x="0.5" y="0.5" width="16" height="16" fill="#fff" stroke="#b4b4b4"/></svg>
<svg style="position:absolute;left:251.2px;top:343px;" width="10" height="20.2" viewBox="0 0 10 20.2"><rect x="0.5" y="0.5" width="9" height="19.2" fill="#b4c9d8" stroke="#7f9cb2"/><rect x="3.5" y="1.6" width="3" height="15" fill="#e6f3fb"/><rect x="4" y="5.2" width="2" height="11" fill="#d9593f"/><circle cx="5" cy="16.4" r="2.2" fill="#d84a2e"/><g stroke="#8aa5b9" stroke-width="0.7"><line x1="1.4" y1="3.5" x2="3" y2="3.5"/><line x1="1.4" y1="6" x2="3" y2="6"/><line x1="1.4" y1="8.5" x2="3" y2="8.5"/><line x1="1.4" y1="11" x2="3" y2="11"/><line x1="1.4" y1="13.5" x2="3" y2="13.5"/><line x1="7" y1="3.5" x2="8.6" y2="3.5"/><line x1="7" y1="6" x2="8.6" y2="6"/><line x1="7" y1="8.5" x2="8.6" y2="8.5"/><line x1="7" y1="11" x2="8.6" y2="11"/><line x1="7" y1="13.5" x2="8.6" y2="13.5"/></g></svg>
<svg style="position:absolute;left:277.8px;top:345.2px;" width="16" height="16" viewBox="0 0 16 16"><circle cx="8" cy="8" r="6.15" fill="#fff" stroke="#404040" stroke-width="1.35"/></svg>
<span style="position:absolute;left:306.00px;top:344.65px;line-height:18px;white-space:pre;font-size:14px;color:#3a3a3a;letter-spacing:-0.296px;">228 - Теплоснабжение</span>
<div style="position:absolute;left:24px;top:366px;width:1615px;height:1px;background:#d6d6d6"></div>
<span style="position:absolute;left:28.60px;top:370.90px;line-height:18px;white-space:pre;font-size:14px;color:#3a3a3a;letter-spacing:-0.393px;">Гефест</span>
<span style="position:absolute;left:122.50px;top:370.90px;line-height:18px;white-space:pre;font-size:14px;color:#3a3a3a;letter-spacing:-0.387px;">50990587</span>
<svg style="position:absolute;left:217.0px;top:371.5px;" width="17" height="17" viewBox="0 0 17 17"><rect x="0.5" y="0.5" width="16" height="16" fill="#fff" stroke="#b4b4b4"/></svg>
<svg style="position:absolute;left:251.2px;top:370px;" width="10" height="20.2" viewBox="0 0 10 20.2"><rect x="0.5" y="0.5" width="9" height="19.2" fill="#b4c9d8" stroke="#7f9cb2"/><rect x="3.5" y="1.6" width="3" height="15" fill="#e6f3fb"/><rect x="4" y="5.2" width="2" height="11" fill="#d9593f"/><circle cx="5" cy="16.4" r="2.2" fill="#d84a2e"/><g stroke="#8aa5b9" stroke-width="0.7"><line x1="1.4" y1="3.5" x2="3" y2="3.5"/><line x1="1.4" y1="6" x2="3" y2="6"/><line x1="1.4" y1="8.5" x2="3" y2="8.5"/><line x1="1.4" y1="11" x2="3" y2="11"/><line x1="1.4" y1="13.5" x2="3" y2="13.5"/><line x1="7" y1="3.5" x2="8.6" y2="3.5"/><line x1="7" y1="6" x2="8.6" y2="6"/><line x1="7" y1="8.5" x2="8.6" y2="8.5"/><line x1="7" y1="11" x2="8.6" y2="11"/><line x1="7" y1="13.5" x2="8.6" y2="13.5"/></g></svg>
<svg style="position:absolute;left:277.8px;top:371.2px;" width="16" height="16" viewBox="0 0 16 16"><circle cx="8" cy="8" r="6.15" fill="#fff" stroke="#404040" stroke-width="1.35"/></svg>
<span style="position:absolute;left:306.00px;top:370.90px;line-height:18px;white-space:pre;font-size:14px;color:#3a3a3a;letter-spacing:-0.296px;">229 - Теплоснабжение</span>
<div style="position:absolute;left:24px;top:392px;width:1615px;height:1px;background:#d6d6d6"></div>
<span style="position:absolute;left:28.60px;top:397.15px;line-height:18px;white-space:pre;font-size:14px;color:#3a3a3a;letter-spacing:-0.393px;">Гефест</span>
<span style="position:absolute;left:122.50px;top:397.15px;line-height:18px;white-space:pre;font-size:14px;color:#3a3a3a;letter-spacing:-0.387px;">50990592</span>
<svg style="position:absolute;left:217.0px;top:397.5px;" width="17" height="17" viewBox="0 0 17 17"><rect x="0.5" y="0.5" width="16" height="16" fill="#fff" stroke="#b4b4b4"/></svg>
<svg style="position:absolute;left:251.2px;top:396px;" width="10" height="20.2" viewBox="0 0 10 20.2"><rect x="0.5" y="0.5" width="9" height="19.2" fill="#b4c9d8" stroke="#7f9cb2"/><rect x="3.5" y="1.6" width="3" height="15" fill="#e6f3fb"/><rect x="4" y="5.2" width="2" height="11" fill="#d9593f"/><circle cx="5" cy="16.4" r="2.2" fill="#d84a2e"/><g stroke="#8aa5b9" stroke-width="0.7"><line x1="1.4" y1="3.5" x2="3" y2="3.5"/><line x1="1.4" y1="6" x2="3" y2="6"/><line x1="1.4" y1="8.5" x2="3" y2="8.5"/><line x1="1.4" y1="11" x2="3" y2="11"/><line x1="1.4" y1="13.5" x2="3" y2="13.5"/><line x1="7" y1="3.5" x2="8.6" y2="3.5"/><line x1="7" y1="6" x2="8.6" y2="6"/><line x1="7" y1="8.5" x2="8.6" y2="8.5"/><line x1="7" y1="11" x2="8.6" y2="11"/><line x1="7" y1="13.5" x2="8.6" y2="13.5"/></g></svg>
<svg style="position:absolute;left:277.8px;top:398.2px;" width="16" height="16" viewBox="0 0 16 16"><circle cx="8" cy="8" r="6.15" fill="#fff" stroke="#404040" stroke-width="1.35"/></svg>
<span style="position:absolute;left:306.00px;top:397.15px;line-height:18px;white-space:pre;font-size:14px;color:#3a3a3a;letter-spacing:-0.296px;">230 - Теплоснабжение</span>
<div style="position:absolute;left:24px;top:418px;width:1615px;height:1px;background:#d6d6d6"></div>
<span style="position:absolute;left:28.60px;top:423.40px;line-height:18px;white-space:pre;font-size:14px;color:#3a3a3a;letter-spacing:-0.393px;">Гефест</span>
<span style="position:absolute;left:122.50px;top:423.40px;line-height:18px;white-space:pre;font-size:14px;color:#3a3a3a;letter-spacing:-0.387px;">50990656</span>
<svg style="position:absolute;left:217.0px;top:423.5px;" width="17" height="17" viewBox="0 0 17 17"><rect x="0.5" y="0.5" width="16" height="16" fill="#fff" stroke="#b4b4b4"/></svg>
<svg style="position:absolute;left:251.2px;top:422px;" width="10" height="20.2" viewBox="0 0 10 20.2"><rect x="0.5" y="0.5" width="9" height="19.2" fill="#b4c9d8" stroke="#7f9cb2"/><rect x="3.5" y="1.6" width="3" height="15" fill="#e6f3fb"/><rect x="4" y="5.2" width="2" height="11" fill="#d9593f"/><circle cx="5" cy="16.4" r="2.2" fill="#d84a2e"/><g stroke="#8aa5b9" stroke-width="0.7"><line x1="1.4" y1="3.5" x2="3" y2="3.5"/><line x1="1.4" y1="6" x2="3" y2="6"/><line x1="1.4" y1="8.5" x2="3" y2="8.5"/><line x1="1.4" y1="11" x2="3" y2="11"/><line x1="1.4" y1="13.5" x2="3" y2="13.5"/><line x1="7" y1="3.5" x2="8.6" y2="3.5"/><line x1="7" y1="6" x2="8.6" y2="6"/><line x1="7" y1="8.5" x2="8.6" y2="8.5"/><line x1="7" y1="11" x2="8.6" y2="11"/><line x1="7" y1="13.5" x2="8.6" y2="13.5"/></g></svg>
<svg style="position:absolute;left:277.8px;top:424.2px;" width="16" height="16" viewBox="0 0 16 16"><circle cx="8" cy="8" r="6.15" fill="#fff" stroke="#404040" stroke-width="1.35"/></svg>
<span style="position:absolute;left:306.00px;top:423.40px;line-height:18px;white-space:pre;font-size:14px;color:#3a3a3a;letter-spacing:-0.296px;">231 - Теплоснабжение</span>
<div style="position:absolute;left:24px;top:445px;width:1615px;height:1px;background:#d6d6d6"></div>
<span style="position:absolute;left:28.60px;top:449.65px;line-height:18px;white-space:pre;font-size:14px;color:#3a3a3a;letter-spacing:-0.393px;">Гефест</span>
<span style="position:absolute;left:122.50px;top:449.65px;line-height:18px;white-space:pre;font-size:14px;color:#3a3a3a;letter-spacing:-0.387px;">50990662</span>
<svg style="position:absolute;left:217.0px;top:450.5px;" width="17" height="17" viewBox="0 0 17 17"><rect x="0.5" y="0.5" width="16" height="16" fill="#fff" stroke="#b4b4b4"/></svg>
<svg style="position:absolute;left:251.2px;top:448px;" width="10" height="20.2" viewBox="0 0 10 20.2"><rect x="0.5" y="0.5" width="9" height="19.2" fill="#b4c9d8" stroke="#7f9cb2"/><rect x="3.5" y="1.6" width="3" height="15" fill="#e6f3fb"/><rect x="4" y="5.2" width="2" height="11" fill="#d9593f"/><circle cx="5" cy="16.4" r="2.2" fill="#d84a2e"/><g stroke="#8aa5b9" stroke-width="0.7"><line x1="1.4" y1="3.5" x2="3" y2="3.5"/><line x1="1.4" y1="6" x2="3" y2="6"/><line x1="1.4" y1="8.5" x2="3" y2="8.5"/><line x1="1.4" y1="11" x2="3" y2="11"/><line x1="1.4" y1="13.5" x2="3" y2="13.5"/><line x1="7" y1="3.5" x2="8.6" y2="3.5"/><line x1="7" y1="6" x2="8.6" y2="6"/><line x1="7" y1="8.5" x2="8.6" y2="8.5"/><line x1="7" y1="11" x2="8.6" y2="11"/><line x1="7" y1="13.5" x2="8.6" y2="13.5"/></g></svg>
<svg style="position:absolute;left:277.8px;top:450.2px;" width="16" height="16" viewBox="0 0 16 16"><circle cx="8" cy="8" r="6.15" fill="#fff" stroke="#404040" stroke-width="1.35"/></svg>
<span style="position:absolute;left:306.00px;top:449.65px;line-height:18px;white-space:pre;font-size:14px;color:#3a3a3a;letter-spacing:-0.296px;">232 - Теплоснабжение</span>
<div style="position:absolute;left:24px;top:471px;width:1615px;height:1px;background:#d6d6d6"></div>
<span style="position:absolute;left:28.60px;top:475.90px;line-height:18px;white-space:pre;font-size:14px;color:#3a3a3a;letter-spacing:-0.393px;">Гефест</span>
<span style="position:absolute;left:122.50px;top:475.90px;line-height:18px;white-space:pre;font-size:14px;color:#3a3a3a;letter-spacing:-0.387px;">50990657</span>
<svg style="position:absolute;left:217.0px;top:476.5px;" width="17" height="17" viewBox="0 0 17 17"><rect x="0.5" y="0.5" width="16" height="16" fill="#fff" stroke="#b4b4b4"/></svg>
<svg style="position:absolute;left:251.2px;top:475px;" width="10" height="20.2" viewBox="0 0 10 20.2"><rect x="0.5" y="0.5" width="9" height="19.2" fill="#b4c9d8" stroke="#7f9cb2"/><rect x="3.5" y="1.6" width="3" height="15" fill="#e6f3fb"/><rect x="4" y="5.2" width="2" height="11" fill="#d9593f"/><circle cx="5" cy="16.4" r="2.2" fill="#d84a2e"/><g stroke="#8aa5b9" stroke-width="0.7"><line x1="1.4" y1="3.5" x2="3" y2="3.5"/><line x1="1.4" y1="6" x2="3" y2="6"/><line x1="1.4" y1="8.5" x2="3" y2="8.5"/><line x1="1.4" y1="11" x2="3" y2="11"/><line x1="1.4" y1="13.5" x2="3" y2="13.5"/><line x1="7" y1="3.5" x2="8.6" y2="3.5"/><line x1="7" y1="6" x2="8.6" y2="6"/><line x1="7" y1="8.5" x2="8.6" y2="8.5"/><line x1="7" y1="11" x2="8.6" y2="11"/><line x1="7" y1="13.5" x2="8.6" y2="13.5"/></g></svg>
<svg style="position:absolute;left:277.8px;top:476.2px;" width="16" height="16" viewBox="0 0 16 16"><circle cx="8" cy="8" r="6.15" fill="#fff" stroke="#404040" stroke-width="1.35"/></svg>
<span style="position:absolute;left:306.00px;top:475.90px;line-height:18px;white-space:pre;font-size:14px;color:#3a3a3a;letter-spacing:-0.296px;">233 - Теплоснабжение</span>
<div style="position:absolute;left:24px;top:497px;width:1615px;height:1px;background:#d6d6d6"></div>
<span style="position:absolute;left:28.60px;top:502.15px;line-height:18px;white-space:pre;font-size:14px;color:#3a3a3a;letter-spacing:-0.393px;">Гефест</span>
<span style="position:absolute;left:122.50px;top:502.15px;line-height:18px;white-space:pre;font-size:14px;color:#3a3a3a;letter-spacing:-0.387px;">50990634</span>
<svg style="position:absolute;left:217.0px;top:502.5px;" width="17" height="17" viewBox="0 0 17 17"><rect x="0.5" y="0.5" width="16" height="16" fill="#fff" stroke="#b4b4b4"/></svg>
<svg style="position:absolute;left:251.2px;top:501px;" width="10" height="20.2" viewBox="0 0 10 20.2"><rect x="0.5" y="0.5" width="9" height="19.2" fill="#b4c9d8" stroke="#7f9cb2"/><rect x="3.5" y="1.6" width="3" height="15" fill="#e6f3fb"/><rect x="4" y="5.2" width="2" height="11" fill="#d9593f"/><circle cx="5" cy="16.4" r="2.2" fill="#d84a2e"/><g stroke="#8aa5b9" stroke-width="0.7"><line x1="1.4" y1="3.5" x2="3" y2="3.5"/><line x1="1.4" y1="6" x2="3" y2="6"/><line x1="1.4" y1="8.5" x2="3" y2="8.5"/><line x1="1.4" y1="11" x2="3" y2="11"/><line x1="1.4" y1="13.5" x2="3" y2="13.5"/><line x1="7" y1="3.5" x2="8.6" y2="3.5"/><line x1="7" y1="6" x2="8.6" y2="6"/><line x1="7" y1="8.5" x2="8.6" y2="8.5"/><line x1="7" y1="11" x2="8.6" y2="11"/><line x1="7" y1="13.5" x2="8.6" y2="13.5"/></g></svg>
<svg style="position:absolute;left:277.8px;top:503.2px;" width="16" height="16" viewBox="0 0 16 16"><circle cx="8" cy="8" r="6.15" fill="#fff" stroke="#404040" stroke-width="1.35"/></svg>
<span style="position:absolute;left:306.00px;top:502.15px;line-height:18px;white-space:pre;font-size:14px;color:#3a3a3a;letter-spacing:-0.296px;">234 - Теплоснабжение</span>
<div style="position:absolute;left:24px;top:523px;width:1615px;height:1px;background:#d6d6d6"></div>
<span style="position:absolute;left:28.60px;top:528.40px;line-height:18px;white-space:pre;font-size:14px;color:#3a3a3a;letter-spacing:-0.393px;">Гефест</span>
<span style="position:absolute;left:122.50px;top:528.40px;line-height:18px;white-space:pre;font-size:14px;color:#3a3a3a;letter-spacing:-0.387px;">50990658</span>
<svg style="position:absolute;left:217.0px;top:528.5px;" width="17" height="17" viewBox="0 0 17 17"><rect x="0.5" y="0.5" width="16" height="16" fill="#fff" stroke="#b4b4b4"/></svg>
<svg style="position:absolute;left:251.2px;top:527px;" width="10" height="20.2" viewBox="0 0 10 20.2"><rect x="0.5" y="0.5" width="9" height="19.2" fill="#b4c9d8" stroke="#7f9cb2"/><rect x="3.5" y="1.6" width="3" height="15" fill="#e6f3fb"/><rect x="4" y="5.2" width="2" height="11" fill="#d9593f"/><circle cx="5" cy="16.4" r="2.2" fill="#d84a2e"/><g stroke="#8aa5b9" stroke-width="0.7"><line x1="1.4" y1="3.5" x2="3" y2="3.5"/><line x1="1.4" y1="6" x2="3" y2="6"/><line x1="1.4" y1="8.5" x2="3" y2="8.5"/><line x1="1.4" y1="11" x2="3" y2="11"/><line x1="1.4" y1="13.5" x2="3" y2="13.5"/><line x1="7" y1="3.5" x2="8.6" y2="3.5"/><line x1="7" y1="6" x2="8.6" y2="6"/><line x1="7" y1="8.5" x2="8.6" y2="8.5"/><line x1="7" y1="11" x2="8.6" y2="11"/><line x1="7" y1="13.5" x2="8.6" y2="13.5"/></g></svg>
<svg style="position:absolute;left:277.8px;top:529.2px;" width="16" height="16" viewBox="0 0 16 16"><circle cx="8" cy="8" r="6.15" fill="#fff" stroke="#404040" stroke-width="1.35"/></svg>
<span style="position:absolute;left:306.00px;top:528.40px;line-height:18px;white-space:pre;font-size:14px;color:#3a3a3a;letter-spacing:-0.296px;">235 - Теплоснабжение</span>
<div style="position:absolute;left:24px;top:550px;width:1615px;height:1px;background:#d6d6d6"></div>
<span style="position:absolute;left:28.60px;top:554.65px;line-height:18px;white-space:pre;font-size:14px;color:#3a3a3a;letter-spacing:-0.393px;">Гефест</span>
<span style="position:absolute;left:122.50px;top:554.65px;line-height:18px;white-space:pre;font-size:14px;color:#3a3a3a;letter-spacing:-0.387px;">50990470</span>
<svg style="position:absolute;left:217.0px;top:555.5px;" width="17" height="17" viewBox="0 0 17 17"><rect x="0.5" y="0.5" width="16" height="16" fill="#fff" stroke="#b4b4b4"/></svg>
<svg style="position:absolute;left:251.2px;top:553px;" width="10" height="20.2" viewBox="0 0 10 20.2"><rect x="0.5" y="0.5" width="9" height="19.2" fill="#b4c9d8" stroke="#7f9cb2"/><rect x="3.5" y="1.6" width="3" height="15" fill="#e6f3fb"/><rect x="4" y="5.2" width="2" height="11" fill="#d9593f"/><circle cx="5" cy="16.4" r="2.2" fill="#d84a2e"/><g stroke="#8aa5b9" stroke-width="0.7"><line x1="1.4" y1="3.5" x2="3" y2="3.5"/><line x1="1.4" y1="6" x2="3" y2="6"/><line x1="1.4" y1="8.5" x2="3" y2="8.5"/><line x1="1.4" y1="11" x2="3" y2="11"/><line x1="1.4" y1="13.5" x2="3" y2="13.5"/><line x1="7" y1="3.5" x2="8.6" y2="3.5"/><line x1="7" y1="6" x2="8.6" y2="6"/><line x1="7" y1="8.5" x2="8.6" y2="8.5"/><line x1="7" y1="11" x2="8.6" y2="11"/><line x1="7" y1="13.5" x2="8.6" y2="13.5"/></g></svg>
<svg style="position:absolute;left:277.8px;top:555.2px;" width="16" height="16" viewBox="0 0 16 16"><circle cx="8" cy="8" r="6.15" fill="#fff" stroke="#404040" stroke-width="1.35"/></svg>
<span style="position:absolute;left:306.00px;top:554.65px;line-height:18px;white-space:pre;font-size:14px;color:#3a3a3a;letter-spacing:-0.296px;">236 - Теплоснабжение</span>
<div style="position:absolute;left:24px;top:576px;width:1615px;height:1px;background:#d6d6d6"></div>
<span style="position:absolute;left:28.60px;top:580.90px;line-height:18px;white-space:pre;font-size:14px;color:#3a3a3a;letter-spacing:-0.393px;">Гефест</span>
<span style="position:absolute;left:122.50px;top:580.90px;line-height:18px;white-space:pre;font-size:14px;color:#3a3a3a;letter-spacing:-0.387px;">50990569</span>
<svg style="position:absolute;left:217.0px;top:581.5px;" width="17" height="17" viewBox="0 0 17 17"><rect x="0.5" y="0.5" width="16" height="16" fill="#fff" stroke="#b4b4b4"/></svg>
<svg style="position:absolute;left:251.2px;top:580px;" width="10" height="20.2" viewBox="0 0 10 20.2"><rect x="0.5" y="0.5" width="9" height="19.2" fill="#b4c9d8" stroke="#7f9cb2"/><rect x="3.5" y="1.6" width="3" height="15" fill="#e6f3fb"/><rect x="4" y="5.2" width="2" height="11" fill="#d9593f"/><circle cx="5" cy="16.4" r="2.2" fill="#d84a2e"/><g stroke="#8aa5b9" stroke-width="0.7"><line x1="1.4" y1="3.5" x2="3" y2="3.5"/><line x1="1.4" y1="6" x2="3" y2="6"/><line x1="1.4" y1="8.5" x2="3" y2="8.5"/><line x1="1.4" y1="11" x2="3" y2="11"/><line x1="1.4" y1="13.5" x2="3" y2="13.5"/><line x1="7" y1="3.5" x2="8.6" y2="3.5"/><line x1="7" y1="6" x2="8.6" y2="6"/><line x1="7" y1="8.5" x2="8.6" y2="8.5"/><line x1="7" y1="11" x2="8.6" y2="11"/><line x1="7" y1="13.5" x2="8.6" y2="13.5"/></g></svg>
<svg style="position:absolute;left:277.8px;top:581.2px;" width="16" height="16" viewBox="0 0 16 16"><circle cx="8" cy="8" r="6.15" fill="#fff" stroke="#404040" stroke-width="1.35"/></svg>
<span style="position:absolute;left:306.00px;top:580.90px;line-height:18px;white-space:pre;font-size:14px;color:#3a3a3a;letter-spacing:-0.296px;">237 - Теплоснабжение</span>
<div style="position:absolute;left:24px;top:602px;width:1615px;height:1px;background:#d6d6d6"></div>
<span style="position:absolute;left:28.60px;top:607.15px;line-height:18px;white-space:pre;font-size:14px;color:#3a3a3a;letter-spacing:-0.393px;">Гефест</span>
<span style="position:absolute;left:122.50px;top:607.15px;line-height:18px;white-space:pre;font-size:14px;color:#3a3a3a;letter-spacing:-0.387px;">50990469</span>
<svg style="position:absolute;left:217.0px;top:607.5px;" width="17" height="17" viewBox="0 0 17 17"><rect x="0.5" y="0.5" width="16" height="16" fill="#fff" stroke="#b4b4b4"/></svg>
<svg style="position:absolute;left:251.2px;top:606px;" width="10" height="20.2" viewBox="0 0 10 20.2"><rect x="0.5" y="0.5" width="9" height="19.2" fill="#b4c9d8" stroke="#7f9cb2"/><rect x="3.5" y="1.6" width="3" height="15" fill="#e6f3fb"/><rect x="4" y="5.2" width="2" height="11" fill="#d9593f"/><circle cx="5" cy="16.4" r="2.2" fill="#d84a2e"/><g stroke="#8aa5b9" stroke-width="0.7"><line x1="1.4" y1="3.5" x2="3" y2="3.5"/><line x1="1.4" y1="6" x2="3" y2="6"/><line x1="1.4" y1="8.5" x2="3" y2="8.5"/><line x1="1.4" y1="11" x2="3" y2="11"/><line x1="1.4" y1="13.5" x2="3" y2="13.5"/><line x1="7" y1="3.5" x2="8.6" y2="3.5"/><line x1="7" y1="6" x2="8.6" y2="6"/><line x1="7" y1="8.5" x2="8.6" y2="8.5"/><line x1="7" y1="11" x2="8.6" y2="11"/><line x1="7" y1="13.5" x2="8.6" y2="13.5"/></g></svg>
<svg style="position:absolute;left:277.8px;top:608.2px;" width="16" height="16" viewBox="0 0 16 16"><circle cx="8" cy="8" r="6.15" fill="#fff" stroke="#404040" stroke-width="1.35"/></svg>
<span style="position:absolute;left:306.00px;top:607.15px;line-height:18px;white-space:pre;font-size:14px;color:#3a3a3a;letter-spacing:-0.296px;">238 - Теплоснабжение</span>
<span style="position:absolute;left:636.80px;top:607.15px;line-height:18px;white-space:pre;font-size:14px;color:#3a3a3a;letter-spacing:-0.703px;">312806</span>
<div style="position:absolute;left:717px;top:605px;width:184px;height:22px;border:2px solid #1e1e1e;background:#fff"></div>
<span style="position:absolute;left:773.36px;top:607.15px;line-height:18px;white-space:pre;font-size:14px;color:#7a7a7a;letter-spacing:-0.284px;">нет данных</span>
<span style="position:absolute;left:1008.00px;top:607.15px;line-height:18px;white-space:pre;font-size:14px;color:#3a3a3a;letter-spacing:-0.345px;">Пусконала…</span>
<span style="position:absolute;left:1102.60px;top:607.15px;line-height:18px;white-space:pre;font-size:14px;color:#3a3a3a;letter-spacing:-0.276px;">Гефест</span>
<span style="position:absolute;left:1206.00px;top:607.15px;line-height:18px;white-space:pre;font-size:14px;color:#3a3a3a;letter-spacing:-0.225px;">50990469</span>
<span style="position:absolute;left:1316.70px;top:607.15px;line-height:18px;white-space:pre;font-size:14px;color:#3a3a3a;">1</span>
<div style="position:absolute;left:24px;top:628px;width:1615px;height:1px;background:#d6d6d6"></div>
<span style="position:absolute;left:28.60px;top:633.40px;line-height:18px;white-space:pre;font-size:14px;color:#3a3a3a;letter-spacing:-0.393px;">Гефест</span>
<span style="position:absolute;left:122.50px;top:633.40px;line-height:18px;white-space:pre;font-size:14px;color:#3a3a3a;letter-spacing:-0.387px;">50990452</span>
<svg style="position:absolute;left:217.0px;top:633.5px;" width="17" height="17" viewBox="0 0 17 17"><rect x="0.5" y="0.5" width="16" height="16" fill="#fff" stroke="#b4b4b4"/></svg>
<svg style="position:absolute;left:251.2px;top:632px;" width="10" height="20.2" viewBox="0 0 10 20.2"><rect x="0.5" y="0.5" width="9" height="19.2" fill="#b4c9d8" stroke="#7f9cb2"/><rect x="3.5" y="1.6" width="3" height="15" fill="#e6f3fb"/><rect x="4" y="5.2" width="2" height="11" fill="#d9593f"/><circle cx="5" cy="16.4" r="2.2" fill="#d84a2e"/><g stroke="#8aa5b9" stroke-width="0.7"><line x1="1.4" y1="3.5" x2="3" y2="3.5"/><line x1="1.4" y1="6" x2="3" y2="6"/><line x1="1.4" y1="8.5" x2="3" y2="8.5"/><line x1="1.4" y1="11" x2="3" y2="11"/><line x1="1.4" y1="13.5" x2="3" y2="13.5"/><line x1="7" y1="3.5" x2="8.6" y2="3.5"/><line x1="7" y1="6" x2="8.6" y2="6"/><line x1="7" y1="8.5" x2="8.6" y2="8.5"/><line x1="7" y1="11" x2="8.6" y2="11"/><line x1="7" y1="13.5" x2="8.6" y2="13.5"/></g></svg>
<svg style="position:absolute;left:277.8px;top:634.2px;" width="16" height="16" viewBox="0 0 16 16"><circle cx="8" cy="8" r="6.15" fill="#fff" stroke="#404040" stroke-width="1.35"/></svg>
<span style="position:absolute;left:306.00px;top:633.40px;line-height:18px;white-space:pre;font-size:14px;color:#3a3a3a;letter-spacing:-0.296px;">239 - Теплоснабжение</span>
<span style="position:absolute;left:636.80px;top:633.40px;line-height:18px;white-space:pre;font-size:14px;color:#3a3a3a;letter-spacing:-0.703px;">312809</span>
<div style="position:absolute;left:717px;top:631px;width:184px;height:23px;border:2px solid #1e1e1e;background:#fff"></div>
<span style="position:absolute;left:773.36px;top:633.40px;line-height:18px;white-space:pre;font-size:14px;color:#7a7a7a;letter-spacing:-0.284px;">нет данных</span>
<span style="position:absolute;left:1008.00px;top:633.40px;line-height:18px;white-space:pre;font-size:14px;color:#3a3a3a;letter-spacing:-0.345px;">Пусконала…</span>
<span style="position:absolute;left:1102.60px;top:633.40px;line-height:18px;white-space:pre;font-size:14px;color:#3a3a3a;letter-spacing:-0.276px;">Гефест</span>
<span style="position:absolute;left:1206.00px;top:633.40px;line-height:18px;white-space:pre;font-size:14px;color:#3a3a3a;letter-spacing:-0.225px;">50990452</span>
<span style="position:absolute;left:1316.70px;top:633.40px;line-height:18px;white-space:pre;font-size:14px;color:#3a3a3a;">1</span>
</div>
<div style="position:absolute;left:1644px;top:204px;width:21px;height:679px;background:#e8e8e8"></div>
<div style="position:absolute;left:1644px;top:204px;width:21px;height:22px;background:#f0f0f0"></div>
<svg style="position:absolute;left:1648.5px;top:209.5px;" width="12" height="9" viewBox="0 0 12 9"><path d="M1.5 7 L6 2.4 L10.5 7" fill="none" stroke="#7a7a7a" stroke-width="2"/></svg>
<div style="position:absolute;left:1644px;top:226px;width:21px;height:223px;background:#cdcdcd"></div>
<svg style="position:absolute;left:1648.5px;top:868px;" width="12" height="9" viewBox="0 0 12 9"><path d="M1.5 2 L6 6.6 L10.5 2" fill="none" stroke="#606060" stroke-width="2"/></svg>
<div style="position:absolute;left:5px;top:883px;width:1660px;height:21px;background:#e8e8e8"></div>
<div style="position:absolute;left:5px;top:883px;width:21px;height:21px;background:#efefef"></div>
<svg style="position:absolute;left:9.8px;top:887.6px;" width="9" height="12" viewBox="0 0 9 12"><path d="M7.4 1.7 L2.4 6 L7.4 10.3" fill="none" stroke="#858585" stroke-width="2.2"/></svg>
<div style="position:absolute;left:26px;top:883px;width:992px;height:21px;background:#cdcdcd"></div>
<svg style="position:absolute;left:1629.5px;top:887.6px;" width="9" height="12" viewBox="0 0 9 12"><path d="M2 1.5 L6.6 6 L2 10.5" fill="none" stroke="#606060" stroke-width="2"/></svg>
<div style="position:absolute;left:1644px;top:883px;width:21px;height:21px;background:#f0f0f0"></div>
<div style="position:absolute;left:3px;top:904px;width:1663px;height:1px;background:#bebebe"></div>
<div style="position:absolute;left:3px;top:905px;width:1663px;height:2px;background:#ababab"></div>
<div style="position:absolute;left:3px;top:907px;width:1663px;height:1px;background:#cdcdcd"></div>
<div style="position:absolute;left:0px;top:908px;width:1671px;height:1px;background:#f6f6f6"></div>
<div style="position:absolute;left:0px;top:909px;width:1671px;height:1px;background:#e8e8e8"></div>
<div style="position:absolute;left:0px;top:910px;width:1671px;height:1px;background:#d8d8d8"></div>
<div style="position:absolute;left:0px;top:911px;width:1671px;height:22px;background:#f0f0f0"></div>
<div style="position:absolute;left:0px;top:908px;width:1px;height:25px;background:#c9c9c9"></div>
<span style="position:absolute;left:22.00px;top:913.90px;line-height:18px;white-space:pre;font-size:14px;color:#3a3a3a;letter-spacing:-0.237px;">Записей: 67</span>
<div style="position:absolute;left:107px;top:913px;width:1px;height:20px;background:#d0d0d0"></div>
<span style="position:absolute;left:116.00px;top:913.90px;line-height:18px;white-space:pre;font-size:14px;color:#3a3a3a;letter-spacing:-0.271px;">217 - Теплоснабжение</span>
<svg style="position:absolute;left:1251px;top:913px;" width="18" height="19" viewBox="0 0 18 19"><rect x="4.6" y="0.4" width="8.8" height="4" fill="#f2b860" stroke="#c8912f" stroke-width="0.8"/><path d="M0.8 3.6 H17.2 V6.2 L14.4 11.4 H3.6 L0.8 6.2 Z" fill="#cfd3d6" stroke="#6e757b" stroke-width="1"/><g stroke="#6e757b" stroke-width="0.9"><line x1="4" y1="5.4" x2="4" y2="8.6"/><line x1="6.5" y1="5.4" x2="6.5" y2="8.6"/><line x1="9" y1="5.4" x2="9" y2="8.6"/><line x1="11.5" y1="5.4" x2="11.5" y2="8.6"/><line x1="14" y1="5.4" x2="14" y2="8.6"/></g><path d="M6.4 11.4 H11.6 V14 L9 18.6 L6.4 14 Z" fill="#8e959b" stroke="#5c6369" stroke-width="0.8"/></svg>
<span style="position:absolute;left:1276.00px;top:913.90px;line-height:18px;white-space:pre;font-size:14px;color:#3a3a3a;letter-spacing:0.076px;">Служб опроса: 1; портов: 11, действует: 5, свободно: 5</span>
<div style="position:absolute;left:1645px;top:913px;width:1px;height:20px;background:#d0d0d0"></div>
<span style="position:absolute;left:1654.60px;top:913.90px;line-height:18px;white-space:pre;font-size:14px;color:#3a3a3a;letter-spacing:-0.026px;">htt</span>
<div style="position:absolute;left:485px;top:-5px;width:950px;height:852px;background:#f0f0f0;border:1px solid #a6a6a6;box-shadow:inset 0 0 0 1px #d9d9d9"></div>
<svg style="position:absolute;left:496px;top:6px;" width="21" height="20.4" viewBox="0 0 21 20.4"><path d="M10.2 0 L20.3 8.3 L19.2 9.8 L10.2 2.4 L1.1 9.8 L0 8.3 Z" fill="#3d97e3"/><path d="M1.8 10.3 L10.2 3.7 L18.7 10.3 V18.4 Q18.7 19.9 17.2 19.9 H13 V12 H7.8 V19.9 H3.3 Q1.8 19.9 1.8 18.4 Z" fill="#4da5ea"/></svg>
<span style="position:absolute;left:521.50px;top:8.00px;line-height:18px;white-space:pre;font-size:18px;color:#9a9a9a;letter-spacing:0.002px;">Редактирование точки учета</span>
<svg style="position:absolute;left:1398.5px;top:9.5px;" width="13" height="13" viewBox="0 0 13 13"><path d="M0.5 0.5 L12.5 12.5 M12.5 0.5 L0.5 12.5" stroke="#a8a8a8" stroke-width="1.2"/></svg>
<div style="position:absolute;left:486px;top:36px;width:948px;height:1px;background:#bdbdbd"></div>
<span style="position:absolute;left:518.50px;top:50.80px;line-height:18px;white-space:pre;transform-origin:0 0;transform:scaleX(1.0665);font-size:14px;color:#2e2e2e;font-weight:bold;">Устройство съема и передачи данных</span>
<span style="position:absolute;left:518.50px;top:74.20px;line-height:18px;white-space:pre;font-size:14px;color:#3a3a3a;letter-spacing:0.034px;">Выбор и настройка подключения устройства к точке учета</span>
<span style="position:absolute;left:1161.00px;top:96.10px;line-height:18px;white-space:pre;font-size:14px;color:#1b7fcf;letter-spacing:-0.286px;text-decoration:underline;">217</span>
<span style="position:absolute;left:1186.00px;top:96.10px;line-height:18px;white-space:pre;font-size:14px;color:#3a3a3a;letter-spacing:-0.170px;">- Теплоснабжение (летний режим)</span>
<svg style="position:absolute;left:1413.5px;top:96px;" width="10" height="20.2" viewBox="0 0 10 20.2"><rect x="0.5" y="0.5" width="9" height="19.2" fill="#b4c9d8" stroke="#7f9cb2"/><rect x="3.5" y="1.6" width="3" height="15" fill="#e6f3fb"/><rect x="4" y="5.2" width="2" height="11" fill="#d9593f"/><circle cx="5" cy="16.4" r="2.2" fill="#d84a2e"/><g stroke="#8aa5b9" stroke-width="0.7"><line x1="1.4" y1="3.5" x2="3" y2="3.5"/><line x1="1.4" y1="6" x2="3" y2="6"/><line x1="1.4" y1="8.5" x2="3" y2="8.5"/><line x1="1.4" y1="11" x2="3" y2="11"/><line x1="1.4" y1="13.5" x2="3" y2="13.5"/><line x1="7" y1="3.5" x2="8.6" y2="3.5"/><line x1="7" y1="6" x2="8.6" y2="6"/><line x1="7" y1="8.5" x2="8.6" y2="8.5"/><line x1="7" y1="11" x2="8.6" y2="11"/><line x1="7" y1="13.5" x2="8.6" y2="13.5"/></g></svg>
<div style="position:absolute;left:487px;top:120px;width:946px;height:1px;background:#b6b6b6"></div>
<div style="position:absolute;left:487px;top:121px;width:946px;height:1px;background:#d2d2d2"></div>
<div style="position:absolute;left:489px;top:123px;width:177px;height:661px;background:#fff;border:1px solid #b4b4b4"></div>
<div style="position:absolute;left:490px;top:124px;width:175px;height:29px;background:#efefef"></div>
<span style="position:absolute;left:515.50px;top:129.20px;line-height:18px;white-space:pre;font-size:14px;color:#3a3a3a;letter-spacing:-0.609px;">Общие</span>
<svg style="position:absolute;left:515px;top:157px;" width="18.0" height="20.0" viewBox="0 0 18 20"><rect x="6.3" y="14.6" width="5.4" height="5" rx="0.6" fill="#4d647b"/><circle cx="9" cy="8.6" r="7.2" fill="#ececec" stroke="#5b6f82" stroke-width="2.6"/><path d="M5.9 9.4 A3.2 3.2 0 0 1 8.4 5.5" fill="none" stroke="#e2574b" stroke-width="1.4"/><path d="M9.6 5.5 A3.2 3.2 0 0 1 12.1 9.4" fill="none" stroke="#4d9be0" stroke-width="1.4"/><path d="M8.8 9.2 L10.2 7" stroke="#e2574b" stroke-width="0.9"/></svg>
<span style="position:absolute;left:537.30px;top:158.30px;line-height:18px;white-space:pre;font-size:14px;color:#3a3a3a;letter-spacing:0.136px;">Точка учета</span>
<svg style="position:absolute;left:515px;top:187px;" width="18" height="19" viewBox="0 0 18 19"><path d="M0.3 17.8 C1.6 14.6 4.6 13.6 9 13.6 C13.4 13.6 16.4 14.6 17.7 17.8 L14.6 17.8 C13.4 16.2 11.4 15.9 9 15.9 C6.6 15.9 4.6 16.2 3.4 17.8 Z" fill="#66727f"/><circle cx="9" cy="8" r="7.4" fill="#dfe3e6"/><circle cx="9" cy="8" r="5.9" fill="#eef1f3"/><circle cx="9" cy="8" r="4.8" fill="#2497f3"/><circle cx="8" cy="6.8" r="1.7" fill="#58b4f8"/></svg>
<span style="position:absolute;left:537.30px;top:187.00px;line-height:18px;white-space:pre;font-size:14px;color:#3a3a3a;letter-spacing:0.080px;">Датчики</span>
<svg style="position:absolute;left:514px;top:216px;" width="19" height="17" viewBox="0 0 19 17"><path d="M9.5 0.8 L18.6 16.2 H0.4 Z" fill="#eeb868"/><rect x="8" y="5.2" width="3" height="5.6" fill="#767676"/><rect x="8" y="12" width="3" height="2.6" fill="#767676"/></svg>
<span style="position:absolute;left:537.30px;top:215.60px;line-height:18px;white-space:pre;font-size:14px;color:#3a3a3a;letter-spacing:0.030px;">Диагностика</span>
<svg style="position:absolute;left:514.5px;top:248.5px;" width="19" height="19" viewBox="0 0 19 19"><rect x="0.8" y="1.8" width="7.4" height="7.4" fill="#fff" stroke="#6a6a6a" stroke-width="1.2"/><path d="M2 4.6 L4.2 7 L8.6 0.8" fill="none" stroke="#86c2a0" stroke-width="1.5"/><rect x="0.8" y="11.2" width="7.4" height="7.4" fill="#fff" stroke="#6a6a6a" stroke-width="1.2"/><rect x="11.5" y="5" width="6.5" height="1.8" fill="#6a6a6a"/><rect x="11.5" y="13.6" width="6.5" height="1.8" fill="#6a6a6a"/></svg>
<span style="position:absolute;left:537.30px;top:240.60px;line-height:18px;white-space:pre;font-size:14px;color:#3a3a3a;letter-spacing:-0.161px;">Отображаемые</span>
<span style="position:absolute;left:537.30px;top:256.60px;line-height:18px;white-space:pre;font-size:14px;color:#3a3a3a;letter-spacing:-0.128px;">параметры</span>
<svg style="position:absolute;left:514.5px;top:295.5px;" width="19" height="18" viewBox="0 0 19 18"><defs><linearGradient id="wg" x1="0" y1="0" x2="0" y2="1"><stop offset="0" stop-color="#7d8995"/><stop offset="1" stop-color="#485564"/></linearGradient></defs><path d="M7.2 4.6 V2.8 A2.3 2.3 0 0 1 11.8 2.8 V4.6" fill="none" stroke="#63707c" stroke-width="1.4"/><path d="M4.4 4.2 H14.6 L18.6 17 H0.4 Z" fill="url(#wg)"/></svg>
<span style="position:absolute;left:537.30px;top:278.10px;line-height:18px;white-space:pre;font-size:14px;color:#3a3a3a;letter-spacing:-0.161px;">Отображаемые</span>
<span style="position:absolute;left:537.30px;top:295.10px;line-height:18px;white-space:pre;font-size:14px;color:#3a3a3a;letter-spacing:-0.444px;">единицы</span>
<span style="position:absolute;left:537.30px;top:311.60px;line-height:18px;white-space:pre;font-size:14px;color:#3a3a3a;letter-spacing:-0.262px;">измерения</span>
<svg style="position:absolute;left:516px;top:341.5px;" width="16" height="17.6" viewBox="0 0 16 17.6"><path d="M5.5 4 V1 H11 L15 5 V13.4 H10.5" fill="#fff" stroke="#6a6a6a" stroke-width="1.3"/><path d="M11 1 V5 H15 Z" fill="#8a8a8a" stroke="#6a6a6a" stroke-width="0.8"/><path d="M1 4.8 H6.5 L10.2 8.4 V16.6 H1 Z" fill="#fff" stroke="#6a6a6a" stroke-width="1.3"/><path d="M6.5 4.8 V8.4 H10.2 Z" fill="#8a8a8a" stroke="#6a6a6a" stroke-width="0.8"/></svg>
<span style="position:absolute;left:537.30px;top:333.50px;line-height:18px;white-space:pre;font-size:14px;color:#3a3a3a;letter-spacing:0.152px;">Копирование</span>
<span style="position:absolute;left:537.30px;top:349.20px;line-height:18px;white-space:pre;font-size:14px;color:#3a3a3a;letter-spacing:-0.331px;">данных</span>
<svg style="position:absolute;left:516px;top:373.5px;" width="16" height="19" viewBox="0 0 16 19"><rect x="0.6" y="3" width="14.8" height="15.4" fill="#ebb96e"/><rect x="2.4" y="1.6" width="11.2" height="14.8" fill="#fff"/><path d="M4.4 4.4 V2.6 Q4.4 1.8 5.4 1.8 Q6.2 0.4 8 0.4 Q9.8 0.4 10.6 1.8 Q11.6 1.8 11.6 2.6 V4.4 Z" fill="#6b6f73"/><g stroke="#8e8e8e" stroke-width="1.2"><line x1="4.3" y1="7" x2="11.7" y2="7"/><line x1="4.3" y1="9.4" x2="11.7" y2="9.4"/><line x1="4.3" y1="11.8" x2="11.7" y2="11.8"/><line x1="4.3" y1="14" x2="11.7" y2="14"/></g></svg>
<span style="position:absolute;left:537.30px;top:374.10px;line-height:18px;white-space:pre;font-size:14px;color:#3a3a3a;letter-spacing:-0.318px;">Отчеты</span>
<svg style="position:absolute;left:516px;top:402.5px;" width="16" height="20" viewBox="0 0 16 20"><path d="M0.5 0.5 H11.5 L15.5 4.5 V19.5 H0.5 Z" fill="#dcedfb"/><path d="M11.5 0.5 V4.5 H15.5 Z" fill="#a9d3f5"/><path d="M6.4 4 H10 L12.6 18 H9 L8.7 15.2 H7 L6.6 18 H3.8 Z M7.3 12.8 H8.5 L8 8 Z" fill="#f5143c"/></svg>
<span style="position:absolute;left:537.30px;top:402.90px;line-height:18px;white-space:pre;font-size:14px;color:#3a3a3a;letter-spacing:-0.029px;">Атрибуты</span>
<div style="position:absolute;left:490px;top:427px;width:175px;height:29px;background:#efefef"></div>
<span style="position:absolute;left:515.50px;top:432.00px;line-height:18px;white-space:pre;font-size:14px;color:#3a3a3a;letter-spacing:-0.500px;">Расчёт</span>
<svg style="position:absolute;left:515.5px;top:460px;" width="16" height="19" viewBox="0 0 16 19"><rect x="0.6" y="0.6" width="14.8" height="17.8" fill="#5a6672"/><rect x="1.8" y="1.6" width="12.4" height="3.8" fill="#8fd07a"/><g fill="#eef1f3"><rect x="2" y="6.6" width="2.6" height="2.4"/><rect x="5.4" y="6.6" width="2.6" height="2.4"/><rect x="8.8" y="6.6" width="2.6" height="2.4"/><rect x="2" y="9.8" width="2.6" height="2.4"/><rect x="5.4" y="9.8" width="2.6" height="2.4"/><rect x="8.8" y="9.8" width="2.6" height="2.4"/><rect x="2" y="13" width="2.6" height="2.4"/><rect x="5.4" y="13" width="2.6" height="2.4"/><rect x="8.8" y="13" width="2.6" height="2.4"/><rect x="2" y="16" width="2.6" height="1.6"/><rect x="5.4" y="16" width="2.6" height="1.6"/><rect x="8.8" y="16" width="2.6" height="1.6"/></g><rect x="12" y="6.6" width="2.4" height="5.6" fill="#3f8fdc"/><rect x="12" y="13" width="2.4" height="4.6" fill="#f3c24b"/></svg>
<span style="position:absolute;left:537.30px;top:460.60px;line-height:18px;white-space:pre;font-size:14px;color:#3a3a3a;letter-spacing:-0.268px;">Расчет и хранение</span>
<span style="position:absolute;left:515px;top:492px;font-family:'Liberation Serif',serif;font-style:italic;font-weight:bold;font-size:20px;line-height:20px;color:#686868">f</span><span style="position:absolute;left:522.5px;top:495.5px;font-size:10.5px;font-weight:bold;font-style:italic;line-height:14px;color:#6c6c6c;letter-spacing:-0.5px">(x)</span>
<span style="position:absolute;left:537.30px;top:486.10px;line-height:18px;white-space:pre;font-size:14px;color:#3a3a3a;letter-spacing:-0.398px;">Расчётные</span>
<span style="position:absolute;left:537.30px;top:501.60px;line-height:18px;white-space:pre;font-size:14px;color:#3a3a3a;letter-spacing:-0.114px;">формулы</span>
<div style="position:absolute;left:490px;top:522px;width:175px;height:29px;background:#efefef"></div>
<span style="position:absolute;left:515.50px;top:526.60px;line-height:18px;white-space:pre;font-size:14px;color:#3a3a3a;letter-spacing:-0.009px;">Опрос</span>
<div style="position:absolute;left:535px;top:551px;width:130px;height:28px;background:#dcdcdc"></div>
<svg style="position:absolute;left:513.1px;top:553.6px;" width="20.4" height="18.6" viewBox="0 0 20.4 18.6"><path d="M5.3 17.6 A9.2 9.2 0 1 1 14.7 17.6 L10 13.3 Z" fill="#fff" stroke="#8c8c8c" stroke-width="1.3" stroke-linejoin="round"/><path d="M5.54 13.9 A6.2 6.2 0 0 1 12.4 3.9" fill="none" stroke="#3f86d0" stroke-width="2.6"/><path d="M15.9 7.2 A6.4 6.4 0 0 1 14 14.6" fill="none" stroke="#e0573a" stroke-width="2.6"/><path d="M10 10.1 L14.4 5.4" stroke="#8a8a8a" stroke-width="1.1"/><circle cx="10" cy="10.1" r="1.9" fill="#757575"/></svg>
<span style="position:absolute;left:537.30px;top:555.80px;line-height:18px;white-space:pre;font-size:14px;color:#3a3a3a;letter-spacing:-0.125px;">Устройство</span>
<svg style="position:absolute;left:515px;top:582.8px;" width="18" height="20" viewBox="0 0 18 20"><defs><radialGradient id="gg" cx="0.4" cy="0.35" r="0.7"><stop offset="0" stop-color="#7cc6f7"/><stop offset="1" stop-color="#1f86dd"/></radialGradient></defs><rect x="5" y="17.6" width="8" height="1.8" rx="0.8" fill="#f2b41c"/><rect x="7.8" y="15.6" width="2.4" height="2.4" fill="#e7a514"/><circle cx="9" cy="8.4" r="8" fill="url(#gg)"/><g fill="none" stroke="#bfe3fb" stroke-width="0.5" opacity="0.55"><ellipse cx="9" cy="8.4" rx="3.6" ry="8"/><line x1="1" y1="8.4" x2="17" y2="8.4"/><line x1="9" y1="0.4" x2="9" y2="16.4"/><path d="M2.2 4.4 H15.8 M2.2 12.4 H15.8"/></g></svg>
<span style="position:absolute;left:537.30px;top:584.90px;line-height:18px;white-space:pre;font-size:14px;color:#3a3a3a;letter-spacing:-0.234px;">Подключения</span>
<svg style="position:absolute;left:500px;top:617.5px;" width="5" height="9" viewBox="0 0 5 9"><path d="M0 0 L5 4.5 L0 9 Z" fill="#555"/></svg>
<svg style="position:absolute;left:514.5px;top:613px;" width="18" height="18.6" viewBox="0 0 19 20"><path d="M1 4.4 A3.2 3.2 0 0 1 6 1.4 Z" fill="#9aa2aa"/><path d="M18 4.4 A3.2 3.2 0 0 0 13 1.4 Z" fill="#9aa2aa"/><path d="M3.4 19.4 L5.4 16.4 M15.6 19.4 L13.6 16.4" stroke="#7a838c" stroke-width="1.6"/><circle cx="9.5" cy="10.4" r="7.6" fill="#f7f9fa" stroke="#8f99a3" stroke-width="1.8"/><path d="M9.5 10.6 L6 6.4 M9.5 10.6 L13 8.4" stroke="#e8304a" stroke-width="1.3" stroke-linecap="round"/></svg>
<span style="position:absolute;left:537.30px;top:612.90px;line-height:18px;white-space:pre;font-size:14px;color:#3a3a3a;letter-spacing:0.172px;">Автоопрос</span>
<svg style="position:absolute;left:672px;top:444px;" width="4" height="20" viewBox="0 0 4 20"><rect x="1" y="1.0" width="2" height="2" fill="#505050"/><rect x="1" y="5.7" width="2" height="2" fill="#505050"/><rect x="1" y="10.4" width="2" height="2" fill="#505050"/><rect x="1" y="15.1" width="2" height="2" fill="#505050"/></svg>
<div style="position:absolute;left:681px;top:123px;width:750px;height:661px;background:#f0f0f0;border:1px solid #c4c4c4"></div>
<span style="position:absolute;left:686.00px;top:129.70px;line-height:18px;white-space:pre;font-size:14px;color:#3a3a3a;letter-spacing:0.119px;">Устройство, с которого</span>
<span style="position:absolute;left:686.00px;top:145.80px;line-height:18px;white-space:pre;font-size:14px;color:#3a3a3a;letter-spacing:0.061px;">производится загрузка данных:</span>
<span style="position:absolute;left:835.84px;top:173.20px;line-height:18px;white-space:pre;font-size:14px;color:#3a3a3a;letter-spacing:0.236px;">Счетчик:</span>
<div style="position:absolute;left:913px;top:133px;width:513px;height:25px;background:#fff;border:1px solid #ababab"></div>
<div style="position:absolute;left:1345px;top:134px;width:1px;height:23px;background:#c4c4c4"></div>
<div style="position:absolute;left:1365px;top:134px;width:1px;height:23px;background:#c4c4c4"></div>
<div style="position:absolute;left:1385px;top:134px;width:1px;height:23px;background:#c4c4c4"></div>
<div style="position:absolute;left:1405px;top:134px;width:1px;height:23px;background:#c4c4c4"></div>
<div style="position:absolute;left:1346px;top:134px;width:79px;height:23px;background:#f0f0f0"></div>
<div style="position:absolute;left:1365px;top:134px;width:1px;height:23px;background:#c4c4c4"></div>
<div style="position:absolute;left:1385px;top:134px;width:1px;height:23px;background:#c4c4c4"></div>
<div style="position:absolute;left:1405px;top:134px;width:1px;height:23px;background:#c4c4c4"></div>
<svg style="position:absolute;left:1351px;top:143px;" width="9" height="5" viewBox="0 0 9 5"><path d="M0 0 H9 L4.5 5 Z" fill="#646464"/></svg>
<svg style="position:absolute;left:1369.5px;top:140.4px;" width="12" height="10" viewBox="0 0 12 10"><path d="M1 1 L11 9 M11 1 L1 9" stroke="#646464" stroke-width="2.5"/></svg>
<svg style="position:absolute;left:1387.5px;top:137.2px;" width="16" height="16" viewBox="0 0 16 16"><path d="M2.4 9 A5.6 5.6 0 0 1 10 3.2" fill="none" stroke="#4fb848" stroke-width="2.2"/><path d="M8.6 0.2 L13 3.4 L8.6 6.6 Z" fill="#4fb848"/><path d="M13.6 7 A5.6 5.6 0 0 1 6 12.8" fill="none" stroke="#ee5a2a" stroke-width="2.2"/><path d="M7.4 15.8 L3 12.6 L7.4 9.4 Z" fill="#ee5a2a"/></svg>
<svg style="position:absolute;left:1408px;top:143px;" width="16" height="5" viewBox="0 0 16 5"><rect x="1.0" y="1.5" width="2.6" height="2.2" fill="#505050"/><rect x="5.7" y="1.5" width="2.6" height="2.2" fill="#505050"/><rect x="10.4" y="1.5" width="2.6" height="2.2" fill="#505050"/></svg>
<span style="position:absolute;left:917.30px;top:136.60px;line-height:18px;white-space:pre;font-size:14px;color:#3a3a3a;letter-spacing:-0.295px;">Гефест  #50990415</span>
<div style="position:absolute;left:913px;top:169px;width:513px;height:25px;background:#fff;border:1px solid #ababab"></div>
<div style="position:absolute;left:1345px;top:170px;width:1px;height:23px;background:#c4c4c4"></div>
<div style="position:absolute;left:1365px;top:170px;width:1px;height:23px;background:#c4c4c4"></div>
<div style="position:absolute;left:1385px;top:170px;width:1px;height:23px;background:#c4c4c4"></div>
<div style="position:absolute;left:1405px;top:170px;width:1px;height:23px;background:#c4c4c4"></div>
<div style="position:absolute;left:1346px;top:170px;width:79px;height:23px;background:#f0f0f0"></div>
<div style="position:absolute;left:1365px;top:170px;width:1px;height:23px;background:#c4c4c4"></div>
<div style="position:absolute;left:1385px;top:170px;width:1px;height:23px;background:#c4c4c4"></div>
<div style="position:absolute;left:1405px;top:170px;width:1px;height:23px;background:#c4c4c4"></div>
<svg style="position:absolute;left:1351px;top:179px;" width="9" height="5" viewBox="0 0 9 5"><path d="M0 0 H9 L4.5 5 Z" fill="#646464"/></svg>
<svg style="position:absolute;left:1369.5px;top:176.4px;" width="12" height="10" viewBox="0 0 12 10"><path d="M1 1 L11 9 M11 1 L1 9" stroke="#646464" stroke-width="2.5"/></svg>
<div style="position:absolute;left:1386px;top:170px;width:19px;height:23px;background:#f8f8f8"></div>
<svg style="position:absolute;left:1387.5px;top:173.2px;" width="16" height="16" viewBox="0 0 16 16"><path d="M2.4 9 A5.6 5.6 0 0 1 10 3.2" fill="none" stroke="#c8c8c8" stroke-width="2.2"/><path d="M8.6 0.2 L13 3.4 L8.6 6.6 Z" fill="#c8c8c8"/><path d="M13.6 7 A5.6 5.6 0 0 1 6 12.8" fill="none" stroke="#c8c8c8" stroke-width="2.2"/><path d="M7.4 15.8 L3 12.6 L7.4 9.4 Z" fill="#c8c8c8"/></svg>
<svg style="position:absolute;left:1410px;top:176px;" width="11" height="11" viewBox="0 0 11 11"><path d="M5.5 0.5 V10.5 M0.5 5.5 H10.5" stroke="#5c5c5c" stroke-width="2.6"/></svg>
<div style="position:absolute;left:689px;top:212px;width:734px;height:562px;background:#f0f0f0;border:1px solid #c0c0c0"></div>
<div style="position:absolute;left:686px;top:216px;width:4px;height:530px;background:#c8c8c8"></div>
<div class="clip" style="left:714px;top:740px;width:708px;height:33px">
<div style="position:absolute;left:1px;top:0px;width:706px;height:33px;background:#fff"></div>
<div style="position:absolute;left:0px;top:0px;width:1px;height:33px;background:#a8a8a8"></div>
<div style="position:absolute;left:1px;top:21px;width:684px;height:1px;background:#d2d2d2"></div>
<div style="position:absolute;left:451px;top:0px;width:1px;height:33px;background:#d2d2d2"></div>
<span style="position:absolute;left:5.80px;top:-0.20px;line-height:18px;white-space:pre;font-size:14px;color:#3a3a3a;letter-spacing:-0.246px;">M1 - Масса по подающей магистрали</span>
<span style="position:absolute;left:5.80px;top:25.60px;line-height:18px;white-space:pre;font-size:14px;color:#3a3a3a;letter-spacing:-0.014px;">M2 - Масса по обратной магистрали</span>
<span style="position:absolute;left:457.00px;top:-0.20px;line-height:18px;white-space:pre;font-size:14px;color:#3a3a3a;letter-spacing:-0.247px;">Масса теплоносителя</span>
<div style="position:absolute;left:685px;top:0px;width:22px;height:33px;background:#f0f0f0"></div>
<svg style="position:absolute;left:690px;top:16.5px;" width="12" height="9" viewBox="0 0 12 9"><path d="M1.5 2 L6 6.6 L10.5 2" fill="none" stroke="#606060" stroke-width="2"/></svg>
</div>
<div style="position:absolute;left:682px;top:783px;width:749px;height:1px;background:#c4c4c4"></div>
<div style="position:absolute;left:486px;top:786px;width:948px;height:1px;background:#d0d0d0"></div>
<div style="position:absolute;left:843px;top:800px;width:104px;height:28px;background:#f0f0f0;border:1px solid #adadad"></div>
<span style="position:absolute;left:869.42px;top:805.40px;line-height:18px;white-space:pre;font-size:14px;color:#3a3a3a;letter-spacing:-0.170px;">&lt; Назад</span>
<div style="position:absolute;left:955px;top:800px;width:105px;height:28px;background:#f0f0f0;border:1px solid #adadad"></div>
<span style="position:absolute;left:980.99px;top:805.40px;line-height:18px;white-space:pre;font-size:14px;color:#3a3a3a;letter-spacing:-0.011px;">Далее &gt;</span>
<svg style="position:absolute;left:1200px;top:799px;" width="107" height="30" viewBox="0 0 107 30"><rect x="1.75" y="1.75" width="103.5" height="26.5" fill="#f0f0f0" stroke="#3a3a3a" stroke-width="1.5"/></svg>
<span style="position:absolute;left:1243.82px;top:805.40px;line-height:18px;white-space:pre;font-size:14px;color:#3a3a3a;letter-spacing:-0.867px;">OK</span>
<div style="position:absolute;left:1314px;top:800px;width:105px;height:28px;background:#f0f0f0;border:1px solid #adadad"></div>
<span style="position:absolute;left:1335.38px;top:805.40px;line-height:18px;white-space:pre;font-size:14px;color:#3a3a3a;letter-spacing:-0.248px;">Отменить</span>
<div style="position:absolute;left:690px;top:205px;width:756px;height:544px;background:#f0f0f0;border:1px solid #0b75c9;box-shadow:0 0 6px rgba(0,0,0,0.28)"></div>
<svg style="position:absolute;left:702.7px;top:215.3px;" width="17.5" height="17.5" viewBox="0 0 17.5 17.5"><path d="M3.5 5.1 L8.7 0 L17 8.4 L14.8 10.6 L8.7 4.5 L5.8 7.4 Z" fill="#1c9ae0"/><path d="M0 8.4 L8.4 17 L13.8 11.3 L11.3 9 L8.4 12.2 L2.6 6.1 Z" fill="#e51f26"/><circle cx="8.4" cy="8.5" r="1.45" fill="#e51f26"/></svg>
<span style="position:absolute;left:726.30px;top:216.30px;line-height:18px;white-space:pre;font-size:18px;color:#333;letter-spacing:-0.249px;">Свойства оборудования</span>
<svg style="position:absolute;left:1409.5px;top:217.2px;" width="13.5" height="13.5" viewBox="0 0 13.5 13.5"><path d="M0.5 0.5 L13.0 13.0 M13.0 0.5 L0.5 13.0" stroke="#3a3a3a" stroke-width="1.4"/></svg>
<div style="position:absolute;left:691px;top:244px;width:754px;height:1px;background:#c6c6c6"></div>
<div style="position:absolute;left:692px;top:245px;width:750px;height:454px;background:#f0f0f0;border:1px solid #c4c4c4"></div>
<div style="position:absolute;left:694px;top:246px;width:233px;height:452px;background:#0173c7"></div>
<div style="position:absolute;left:694px;top:339px;width:233px;height:46px;background:#0063b1"></div>
<span style="position:absolute;left:728.00px;top:261.30px;line-height:18px;white-space:pre;font-size:14px;color:#ffffff;letter-spacing:-0.430px;">Основные</span>
<span style="position:absolute;left:728.00px;top:307.60px;line-height:18px;white-space:pre;font-size:14px;color:#ffffff;letter-spacing:-0.275px;">Поверка</span>
<span style="position:absolute;left:728.00px;top:353.90px;line-height:18px;white-space:pre;font-size:14px;color:#ffffff;letter-spacing:-0.505px;">Обмен данными</span>
<span style="position:absolute;left:728.00px;top:400.20px;line-height:18px;white-space:pre;font-size:14px;color:#ffffff;letter-spacing:-0.359px;">Параметры опроса</span>
<span style="position:absolute;left:728.00px;top:446.50px;line-height:18px;white-space:pre;font-size:14px;color:#68ace3;letter-spacing:-0.144px;">Коммуникац. оборуд.</span>
<span style="position:absolute;left:728.00px;top:492.80px;line-height:18px;white-space:pre;font-size:14px;color:#ffffff;letter-spacing:-0.583px;">Размещение</span>
<span style="position:absolute;left:728.00px;top:539.10px;line-height:18px;white-space:pre;font-size:14px;color:#68ace3;letter-spacing:0.199px;">Сухие контакты</span>
<span style="position:absolute;left:939.30px;top:266.50px;line-height:18px;white-space:pre;font-size:14px;color:#3a3a3a;letter-spacing:-0.281px;">Пароль:</span>
<span style="position:absolute;left:939.30px;top:301.00px;line-height:18px;white-space:pre;font-size:14px;color:#3a3a3a;letter-spacing:-0.076px;">Пароль 2-го уровня:</span>
<span style="position:absolute;left:939.30px;top:335.30px;line-height:18px;white-space:pre;transform-origin:0 0;transform:scaleX(1.0550);font-size:14px;color:#2e2e2e;font-weight:bold;">Сетевой адрес:</span>
<div style="position:absolute;left:1106px;top:256px;width:272px;height:25px;background:#efefef;border:1px solid #a9a9a9"></div>
<span style="position:absolute;left:1110.60px;top:259.80px;line-height:18px;white-space:pre;font-size:14px;color:#9d9d9d;letter-spacing:-0.168px;">Пароль не используется.</span>
<div style="position:absolute;left:1106px;top:294px;width:272px;height:25px;background:#efefef;border:1px solid #a9a9a9"></div>
<span style="position:absolute;left:1110.60px;top:297.70px;line-height:18px;white-space:pre;font-size:14px;color:#9d9d9d;letter-spacing:-0.082px;">Пароль 2-го уровня не используется.</span>
<div style="position:absolute;left:1106px;top:331px;width:234px;height:25px;background:#fff;border:1px solid #a9a9a9"></div>
<span style="position:absolute;left:1110.60px;top:335.10px;line-height:18px;white-space:pre;font-size:14px;color:#3a3a3a;">3</span>
<svg style="position:absolute;left:1107.2px;top:367.2px;" width="17" height="17" viewBox="0 0 17 17"><rect x="0.5" y="0.5" width="16" height="16" fill="#f5f5f5" stroke="#d2d2d2"/></svg>
<span style="position:absolute;left:1128.50px;top:367.60px;line-height:18px;white-space:pre;font-size:14px;color:#8d8d8d;letter-spacing:-0.393px;">Адресация по серийному номеру</span>
<div style="position:absolute;left:1224px;top:713px;width:104px;height:28px;background:#f0f0f0;border:1px solid #d4d4d4"></div>
<span style="position:absolute;left:1266.32px;top:718.40px;line-height:18px;white-space:pre;font-size:14px;color:#a8a8a8;letter-spacing:-0.867px;">OK</span>
<div style="position:absolute;left:1336px;top:713px;width:105px;height:28px;background:#f0f0f0;border:1px solid #adadad"></div>
<span style="position:absolute;left:1360.86px;top:718.40px;line-height:18px;white-space:pre;font-size:14px;color:#3a3a3a;letter-spacing:0.225px;">Закрыть</span>
</div></body></html>
